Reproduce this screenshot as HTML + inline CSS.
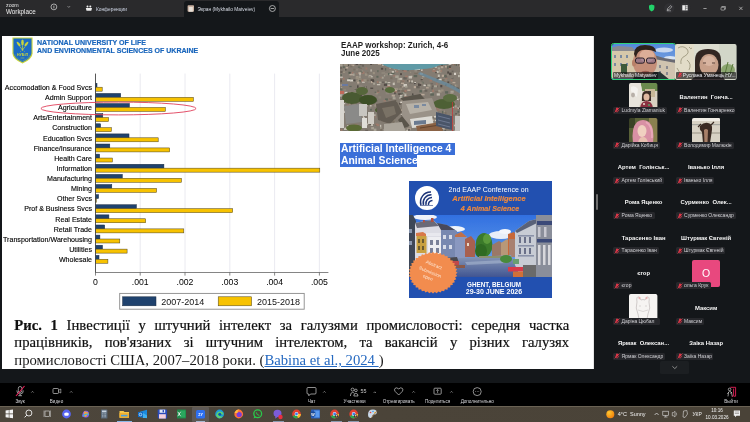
<!DOCTYPE html><html><head><meta charset="utf-8"><style>
*{margin:0;padding:0;box-sizing:border-box}
html,body{width:750px;height:422px;overflow:hidden;background:#14171a;font-family:"Liberation Sans",sans-serif}
.abs{position:absolute}
.t{position:absolute;white-space:nowrap;line-height:1}
#wrap{position:absolute;left:0;top:0;width:750px;height:422px;overflow:hidden;will-change:transform}
</style></head><body><div id="wrap">
<div class="abs" style="left:0;top:0;width:750px;height:17px;background:#2a2a2c"></div>
<div class="abs" style="left:184px;top:1px;width:95px;height:17px;background:#14171a;border-radius:3px 3px 0 0"></div>
<div class="t" style="left:6.1px;top:3.11px;font-size:5.3px;color:#e0e0e0;letter-spacing:-0.1px">zoom</div>
<div class="t" style="left:6px;top:8.97px;font-size:6.3px;color:#f0f0f0">Workplace</div>
<svg class="abs" style="left:0;top:0" width="750" height="17" viewBox="0 0 750 17"><circle cx="53.9" cy="6.9" r="2.9" fill="none" stroke="#ddd" stroke-width="0.7"/><path d="M53.9 5.6 V8.4" stroke="#ddd" stroke-width="0.7"/><path d="M67.6 6.2 L68.8 7.4 L70 6.2" fill="none" stroke="#ccc" stroke-width="0.6"/><circle cx="87.5" cy="6.6" r="1" fill="#eee"/><circle cx="90.3" cy="6.6" r="1" fill="#eee"/><path d="M85.8 8 H92 L91.3 10.7 H86.5 Z" fill="#eee"/><rect x="187.6" y="5.3" width="6.4" height="6.4" rx="0.8" fill="#c8b0a0"/><rect x="188.8" y="7" width="4" height="4.7" fill="#e8e0d8"/><circle cx="272.4" cy="8.5" r="3" fill="none" stroke="#ddd" stroke-width="0.7"/><path d="M270.6 8.5 H274.2" stroke="#ddd" stroke-width="0.7"/><path d="M649 5.6 L651.7 4.6 L654.4 5.6 V8 Q654.4 10.6 651.7 11.6 Q649 10.6 649 8 Z" fill="#22d36a"/><circle cx="669.3" cy="8.1" r="5.2" fill="#303033"/><path d="M667.2 10.3 L667.6 8.6 L670.6 5.6 L671.8 6.8 L668.8 9.8 Z" fill="none" stroke="#ddd" stroke-width="0.6"/><path d="M666.8 10.8 H671" stroke="#ddd" stroke-width="0.5"/><circle cx="685" cy="7.8" r="5.2" fill="#303033"/><rect x="682.3" y="5.2" width="5.4" height="5.2" fill="#eee"/><path d="M685.4 5.2 V10.4 M685.4 6.8 H687.7 M685.4 8.6 H687.7" stroke="#303033" stroke-width="0.5"/><path d="M703.4 8.5 H706.6" stroke="#ccc" stroke-width="0.7"/><rect x="721" y="7.3" width="3.6" height="2.8" fill="none" stroke="#ccc" stroke-width="0.6" rx="0.5"/><path d="M721.8 7.3 V6.5 H725.4 V9.2 H724.6" fill="none" stroke="#ccc" stroke-width="0.6"/><path d="M739.3 6.8 L742.5 10 M742.5 6.8 L739.3 10" stroke="#ccc" stroke-width="0.7"/></svg>
<div class="t" style="left:96px;top:7.84px;font-size:4.8px;color:#cfd6e6">Конференции</div>
<div class="t" style="left:197.6px;top:7.84px;font-size:4.8px;color:#d8dce6">Экран (Mykhailo Matveiev)</div>
<div class="abs" style="left:2.1px;top:36px;width:592.4px;height:333.1px;background:#fff;border-right:0.8px solid #e6e6e6"></div>
<div class="abs" style="left:596px;top:194px;width:1.8px;height:15.5px;background:#6e6e6e;border-radius:1px"></div>
<svg class="abs" style="left:12px;top:37px" width="21" height="27" viewBox="0 0 21 27">
<path d="M0.4 0.4 H20.6 V16.2 Q20.6 21.8 10.5 26.6 Q0.4 21.8 0.4 16.2 Z" fill="#c9d53a"/>
<path d="M1.5 1.5 H19.5 V16 Q19.5 21 10.5 25.3 Q1.5 21 1.5 16 Z" fill="#1c6cc4"/>
<path d="M3 17.5 Q3.6 21 10.5 24.2 Q17.4 21 18 17.5" fill="none" stroke="#c9d53a" stroke-width="0.5" stroke-dasharray="0.7 0.5"/>
<ellipse cx="10.5" cy="5.6" rx="1.3" ry="3" fill="#c9d53a"/>
<ellipse cx="6.6" cy="7" rx="1.1" ry="2.8" fill="#c9d53a" transform="rotate(-38 6.6 7)"/>
<ellipse cx="14.4" cy="7" rx="1.1" ry="2.8" fill="#c9d53a" transform="rotate(38 14.4 7)"/>
<path d="M10.5 8.5 V13.2 M7.8 9.5 L10.2 12.6 M13.2 9.5 L10.8 12.6" stroke="#c9d53a" stroke-width="0.7"/>
<circle cx="10.5" cy="12.8" r="0.9" fill="#c9d53a"/><circle cx="8.6" cy="14.6" r="0.45" fill="#c9d53a"/><circle cx="12.4" cy="14.6" r="0.45" fill="#c9d53a"/>
<text x="10.5" y="19.4" text-anchor="middle" font-family="Liberation Sans" font-weight="700" font-size="3.6" fill="#c9d53a">НУБіП</text>
<rect x="8.6" y="20.6" width="3.8" height="0.8" fill="#c9d53a" opacity="0.6"/>
</svg>
<div class="t" style="left:37.4px;top:38.51px;font-size:7.9px;transform:scaleX(0.895);transform-origin:0 0;font-weight:700;color:#1a66bc;-webkit-text-stroke:0.2px #1a66bc">NATIONAL UNIVERSITY OF LIFE</div>
<div class="t" style="left:37.4px;top:46.91px;font-size:7.9px;transform:scaleX(0.89);transform-origin:0 0;font-weight:700;color:#1a66bc;-webkit-text-stroke:0.2px #1a66bc">AND ENVIRONMENTAL SCIENCES OF UKRAINE</div>
<svg class="abs" style="left:0;top:0" width="750" height="422" viewBox="0 0 750 422">
<line x1="140.2" y1="73.6" x2="140.2" y2="272" stroke="#e4e4ec" stroke-width="0.8"/>
<line x1="185" y1="73.6" x2="185" y2="272" stroke="#e4e4ec" stroke-width="0.8"/>
<line x1="229.8" y1="73.6" x2="229.8" y2="272" stroke="#e4e4ec" stroke-width="0.8"/>
<line x1="274.6" y1="73.6" x2="274.6" y2="272" stroke="#e4e4ec" stroke-width="0.8"/>
<line x1="319.4" y1="73.6" x2="319.4" y2="272" stroke="#e4e4ec" stroke-width="0.8"/>
<rect x="95.5" y="83.30" width="1.50" height="3.9" fill="#1f426e" stroke="#1a2a40" stroke-width="0.5"/>
<rect x="95.5" y="87.20" width="6.70" height="4" fill="#f7c200" stroke="#4a4020" stroke-width="0.5"/>
<text x="92" y="90.00" text-anchor="end" font-family="Liberation Sans" font-size="7.1" fill="#000" stroke="#000" stroke-width="0.12">Accomodation &amp; Food Svcs</text>
<rect x="95.5" y="93.42" width="25.20" height="3.9" fill="#1f426e" stroke="#1a2a40" stroke-width="0.5"/>
<rect x="95.5" y="97.32" width="97.90" height="4" fill="#f7c200" stroke="#4a4020" stroke-width="0.5"/>
<text x="92" y="100.12" text-anchor="end" font-family="Liberation Sans" font-size="7.1" fill="#000" stroke="#000" stroke-width="0.12">Admin Support</text>
<rect x="95.5" y="103.54" width="33.90" height="3.9" fill="#1f426e" stroke="#1a2a40" stroke-width="0.5"/>
<rect x="95.5" y="107.44" width="69.90" height="4" fill="#f7c200" stroke="#4a4020" stroke-width="0.5"/>
<text x="92" y="110.24" text-anchor="end" font-family="Liberation Sans" font-size="7.1" fill="#000" stroke="#000" stroke-width="0.12">Agriculture</text>
<rect x="95.5" y="113.66" width="7.30" height="3.9" fill="#1f426e" stroke="#1a2a40" stroke-width="0.5"/>
<rect x="95.5" y="117.56" width="13.10" height="4" fill="#f7c200" stroke="#4a4020" stroke-width="0.5"/>
<text x="92" y="120.36" text-anchor="end" font-family="Liberation Sans" font-size="7.1" fill="#000" stroke="#000" stroke-width="0.12">Arts/Entertainment</text>
<rect x="95.5" y="123.78" width="5.10" height="3.9" fill="#1f426e" stroke="#1a2a40" stroke-width="0.5"/>
<rect x="95.5" y="127.68" width="15.90" height="4" fill="#f7c200" stroke="#4a4020" stroke-width="0.5"/>
<text x="92" y="130.48" text-anchor="end" font-family="Liberation Sans" font-size="7.1" fill="#000" stroke="#000" stroke-width="0.12">Construction</text>
<rect x="95.5" y="133.90" width="33.50" height="3.9" fill="#1f426e" stroke="#1a2a40" stroke-width="0.5"/>
<rect x="95.5" y="137.80" width="62.70" height="4" fill="#f7c200" stroke="#4a4020" stroke-width="0.5"/>
<text x="92" y="140.60" text-anchor="end" font-family="Liberation Sans" font-size="7.1" fill="#000" stroke="#000" stroke-width="0.12">Education Svcs</text>
<rect x="95.5" y="144.02" width="14.30" height="3.9" fill="#1f426e" stroke="#1a2a40" stroke-width="0.5"/>
<rect x="95.5" y="147.92" width="74.20" height="4" fill="#f7c200" stroke="#4a4020" stroke-width="0.5"/>
<text x="92" y="150.72" text-anchor="end" font-family="Liberation Sans" font-size="7.1" fill="#000" stroke="#000" stroke-width="0.12">Finance/Insurance</text>
<rect x="95.5" y="154.14" width="4.10" height="3.9" fill="#1f426e" stroke="#1a2a40" stroke-width="0.5"/>
<rect x="95.5" y="158.04" width="16.90" height="4" fill="#f7c200" stroke="#4a4020" stroke-width="0.5"/>
<text x="92" y="160.84" text-anchor="end" font-family="Liberation Sans" font-size="7.1" fill="#000" stroke="#000" stroke-width="0.12">Health Care</text>
<rect x="95.5" y="164.26" width="68.40" height="3.9" fill="#1f426e" stroke="#1a2a40" stroke-width="0.5"/>
<rect x="95.5" y="168.16" width="224.30" height="4" fill="#f7c200" stroke="#4a4020" stroke-width="0.5"/>
<text x="92" y="170.96" text-anchor="end" font-family="Liberation Sans" font-size="7.1" fill="#000" stroke="#000" stroke-width="0.12">Information</text>
<rect x="95.5" y="174.38" width="26.80" height="3.9" fill="#1f426e" stroke="#1a2a40" stroke-width="0.5"/>
<rect x="95.5" y="178.28" width="86.00" height="4" fill="#f7c200" stroke="#4a4020" stroke-width="0.5"/>
<text x="92" y="181.08" text-anchor="end" font-family="Liberation Sans" font-size="7.1" fill="#000" stroke="#000" stroke-width="0.12">Manufacturing</text>
<rect x="95.5" y="184.50" width="16.30" height="3.9" fill="#1f426e" stroke="#1a2a40" stroke-width="0.5"/>
<rect x="95.5" y="188.40" width="61.10" height="4" fill="#f7c200" stroke="#4a4020" stroke-width="0.5"/>
<text x="92" y="191.20" text-anchor="end" font-family="Liberation Sans" font-size="7.1" fill="#000" stroke="#000" stroke-width="0.12">Mining</text>
<rect x="95.5" y="194.62" width="3.10" height="3.9" fill="#1f426e" stroke="#1a2a40" stroke-width="0.5"/>
<rect x="95.5" y="198.52" width="0.80" height="4" fill="#f7c200" stroke="#4a4020" stroke-width="0.5"/>
<text x="92" y="201.32" text-anchor="end" font-family="Liberation Sans" font-size="7.1" fill="#000" stroke="#000" stroke-width="0.12">Other Svcs</text>
<rect x="95.5" y="204.74" width="40.90" height="3.9" fill="#1f426e" stroke="#1a2a40" stroke-width="0.5"/>
<rect x="95.5" y="208.64" width="137.20" height="4" fill="#f7c200" stroke="#4a4020" stroke-width="0.5"/>
<text x="92" y="211.44" text-anchor="end" font-family="Liberation Sans" font-size="7.1" fill="#000" stroke="#000" stroke-width="0.12">Prof &amp; Business Svcs</text>
<rect x="95.5" y="214.86" width="13.40" height="3.9" fill="#1f426e" stroke="#1a2a40" stroke-width="0.5"/>
<rect x="95.5" y="218.76" width="50.20" height="4" fill="#f7c200" stroke="#4a4020" stroke-width="0.5"/>
<text x="92" y="221.56" text-anchor="end" font-family="Liberation Sans" font-size="7.1" fill="#000" stroke="#000" stroke-width="0.12">Real Estate</text>
<rect x="95.5" y="224.98" width="9.20" height="3.9" fill="#1f426e" stroke="#1a2a40" stroke-width="0.5"/>
<rect x="95.5" y="228.88" width="88.30" height="4" fill="#f7c200" stroke="#4a4020" stroke-width="0.5"/>
<text x="92" y="231.68" text-anchor="end" font-family="Liberation Sans" font-size="7.1" fill="#000" stroke="#000" stroke-width="0.12">Retail Trade</text>
<rect x="95.5" y="235.10" width="4.40" height="3.9" fill="#1f426e" stroke="#1a2a40" stroke-width="0.5"/>
<rect x="95.5" y="239.00" width="24.30" height="4" fill="#f7c200" stroke="#4a4020" stroke-width="0.5"/>
<text x="92" y="241.80" text-anchor="end" font-family="Liberation Sans" font-size="7.1" fill="#000" stroke="#000" stroke-width="0.12">Transportation/Warehousing</text>
<rect x="95.5" y="245.22" width="7.00" height="3.9" fill="#1f426e" stroke="#1a2a40" stroke-width="0.5"/>
<rect x="95.5" y="249.12" width="31.60" height="4" fill="#f7c200" stroke="#4a4020" stroke-width="0.5"/>
<text x="92" y="251.92" text-anchor="end" font-family="Liberation Sans" font-size="7.1" fill="#000" stroke="#000" stroke-width="0.12">Utilities</text>
<rect x="95.5" y="255.34" width="3.50" height="3.9" fill="#1f426e" stroke="#1a2a40" stroke-width="0.5"/>
<rect x="95.5" y="259.24" width="12.40" height="4" fill="#f7c200" stroke="#4a4020" stroke-width="0.5"/>
<text x="92" y="262.04" text-anchor="end" font-family="Liberation Sans" font-size="7.1" fill="#000" stroke="#000" stroke-width="0.12">Wholesale</text>
<line x1="95.5" y1="73.6" x2="95.5" y2="272.9" stroke="#444" stroke-width="0.9"/>
<line x1="95.5" y1="272.5" x2="328.4" y2="272.5" stroke="#666" stroke-width="0.8"/>
<line x1="95.5" y1="272.5" x2="95.5" y2="275.6" stroke="#555" stroke-width="0.7"/>
<text x="95.5" y="285" text-anchor="middle" font-family="Liberation Sans" font-size="8.7" fill="#000">0</text>
<line x1="140.2" y1="272.5" x2="140.2" y2="275.6" stroke="#555" stroke-width="0.7"/>
<text x="140.2" y="285" text-anchor="middle" font-family="Liberation Sans" font-size="8.7" fill="#000">.001</text>
<line x1="185" y1="272.5" x2="185" y2="275.6" stroke="#555" stroke-width="0.7"/>
<text x="185" y="285" text-anchor="middle" font-family="Liberation Sans" font-size="8.7" fill="#000">.002</text>
<line x1="229.8" y1="272.5" x2="229.8" y2="275.6" stroke="#555" stroke-width="0.7"/>
<text x="229.8" y="285" text-anchor="middle" font-family="Liberation Sans" font-size="8.7" fill="#000">.003</text>
<line x1="274.6" y1="272.5" x2="274.6" y2="275.6" stroke="#555" stroke-width="0.7"/>
<text x="274.6" y="285" text-anchor="middle" font-family="Liberation Sans" font-size="8.7" fill="#000">.004</text>
<line x1="319.4" y1="272.5" x2="319.4" y2="275.6" stroke="#555" stroke-width="0.7"/>
<text x="319.4" y="285" text-anchor="middle" font-family="Liberation Sans" font-size="8.7" fill="#000">.005</text>
<rect x="119.7" y="293.4" width="184.5" height="15.8" fill="#fff" stroke="#8a8a8a" stroke-width="0.9"/>
<rect x="122.6" y="296.8" width="33.4" height="9" fill="#1f426e" stroke="#1a2a40" stroke-width="0.5"/>
<text x="161.3" y="305" font-family="Liberation Sans" font-size="9" fill="#111">2007-2014</text>
<rect x="218.2" y="296.8" width="33.4" height="9" fill="#f7c200" stroke="#4a4020" stroke-width="0.5"/>
<text x="257" y="305" font-family="Liberation Sans" font-size="9" fill="#111">2015-2018</text>
<ellipse cx="118.5" cy="108.5" rx="77.6" ry="6.4" fill="none" stroke="#e0405a" stroke-width="0.9"/>
</svg>
<div class="t" style="left:340.5px;top:40.77px;font-size:8.9px;transform:scaleX(0.9);transform-origin:0 0;font-weight:700;color:#1e1e1e">EAAP workshop: Zurich, 4-6</div>
<div class="t" style="left:340.5px;top:49.47px;font-size:8.9px;transform:scaleX(0.9);transform-origin:0 0;font-weight:700;color:#1e1e1e">June 2025</div>
<svg class="abs" style="left:340px;top:63.6px" width="120.3" height="67.5" viewBox="0 0 120.3 67.5"><defs><filter id="zb" x="-0.05" y="-0.05" width="1.1" height="1.1"><feGaussianBlur stdDeviation="0.5"/></filter><clipPath id="zc"><rect width="120.3" height="67.5"/></clipPath></defs><g clip-path="url(#zc)"><g filter="url(#zb)"><rect x="-3" y="-3" width="127" height="74" fill="#847c72"/><rect x="53.6" y="37.2" width="3.4" height="1.7" fill="#d8d2c8"/><rect x="103.2" y="11.3" width="3.1" height="1.8" fill="#5e665a"/><rect x="95.5" y="4.6" width="1.9" height="1.1" fill="#9c7a6c"/><rect x="3.2" y="66.8" width="3.5" height="2.0" fill="#5e665a"/><rect x="78.0" y="41.6" width="3.2" height="1.1" fill="#a8a294"/><rect x="21.4" y="14.9" width="1.3" height="1.7" fill="#7a7064"/><rect x="70.7" y="11.7" width="1.8" height="1.5" fill="#a8a294"/><rect x="79.5" y="30.0" width="1.9" height="2.6" fill="#6a645c"/><rect x="85.1" y="20.1" width="1.8" height="1.5" fill="#6a645c"/><rect x="67.3" y="5.6" width="1.5" height="1.5" fill="#6a645c"/><rect x="115.8" y="57.3" width="1.2" height="1.3" fill="#a8a294"/><rect x="55.8" y="66.6" width="2.2" height="1.1" fill="#9c7a6c"/><rect x="22.4" y="45.2" width="2.0" height="1.5" fill="#a8a294"/><rect x="116.6" y="51.1" width="1.5" height="1.4" fill="#6a645c"/><rect x="-0.7" y="30.5" width="2.4" height="2.1" fill="#c4beb2"/><rect x="53.0" y="11.3" width="3.0" height="1.2" fill="#9c7a6c"/><rect x="45.2" y="25.6" width="3.6" height="1.0" fill="#5e665a"/><rect x="35.4" y="59.9" width="1.7" height="1.6" fill="#5e665a"/><rect x="76.9" y="5.0" width="3.6" height="1.3" fill="#524c46"/><rect x="-0.8" y="40.7" width="3.2" height="1.6" fill="#6a645c"/><rect x="9.1" y="38.8" width="1.8" height="2.0" fill="#9a9080"/><rect x="74.5" y="6.9" width="2.6" height="2.3" fill="#8e867a"/><rect x="104.6" y="10.8" width="1.6" height="2.5" fill="#5e665a"/><rect x="28.7" y="11.3" width="3.0" height="2.5" fill="#c4beb2"/><rect x="82.5" y="25.2" width="2.4" height="1.1" fill="#a8a294"/><rect x="10.8" y="0.7" width="3.5" height="1.4" fill="#b8a898"/><rect x="29.6" y="55.7" width="2.6" height="1.5" fill="#8e867a"/><rect x="112.3" y="66.4" width="1.5" height="1.8" fill="#9c7a6c"/><rect x="102.8" y="41.0" width="1.9" height="2.5" fill="#c4beb2"/><rect x="90.1" y="2.8" width="2.2" height="1.4" fill="#a8a294"/><rect x="19.7" y="23.8" width="2.6" height="1.2" fill="#9a9080"/><rect x="15.0" y="29.5" width="2.0" height="2.2" fill="#d8d2c8"/><rect x="69.9" y="7.8" width="1.3" height="1.0" fill="#9a9080"/><rect x="84.2" y="65.4" width="1.3" height="2.0" fill="#7a7064"/><rect x="6.3" y="19.8" width="1.5" height="1.1" fill="#7a7064"/><rect x="65.2" y="49.6" width="3.4" height="2.2" fill="#8e867a"/><rect x="95.6" y="62.1" width="2.0" height="2.1" fill="#6a645c"/><rect x="105.1" y="27.2" width="3.1" height="2.4" fill="#5e665a"/><rect x="-0.2" y="44.4" width="2.1" height="1.0" fill="#6a645c"/><rect x="7.9" y="42.8" width="3.6" height="2.4" fill="#9a9080"/><rect x="45.8" y="49.5" width="2.6" height="1.7" fill="#d8d2c8"/><rect x="8.3" y="50.5" width="1.3" height="2.0" fill="#7a7064"/><rect x="0.7" y="65.0" width="1.5" height="2.2" fill="#9c7a6c"/><rect x="111.2" y="15.9" width="1.2" height="1.5" fill="#9c7a6c"/><rect x="73.2" y="34.3" width="3.0" height="1.5" fill="#7a7064"/><rect x="59.3" y="14.9" width="2.2" height="1.4" fill="#9c7a6c"/><rect x="51.0" y="54.4" width="3.4" height="2.4" fill="#b8a898"/><rect x="25.0" y="62.5" width="1.7" height="1.2" fill="#9a9080"/><rect x="101.0" y="57.4" width="2.9" height="2.5" fill="#524c46"/><rect x="99.1" y="5.9" width="2.3" height="2.5" fill="#b8a898"/><rect x="45.1" y="34.4" width="2.8" height="2.1" fill="#5e665a"/><rect x="53.7" y="3.2" width="1.3" height="2.4" fill="#a8a294"/><rect x="81.4" y="17.7" width="2.1" height="2.0" fill="#5e665a"/><rect x="0.4" y="7.5" width="2.3" height="1.0" fill="#524c46"/><rect x="27.2" y="7.9" width="1.3" height="2.0" fill="#7a7064"/><rect x="11.4" y="35.5" width="2.7" height="1.6" fill="#6a645c"/><rect x="82.2" y="12.0" width="2.3" height="1.3" fill="#a8a294"/><rect x="90.9" y="35.4" width="1.3" height="1.4" fill="#9a9080"/><rect x="64.4" y="64.3" width="2.4" height="2.6" fill="#8e867a"/><rect x="46.4" y="53.4" width="3.4" height="1.1" fill="#b8a898"/><rect x="14.0" y="29.7" width="2.7" height="2.5" fill="#b8a898"/><rect x="65.7" y="43.7" width="2.4" height="2.3" fill="#9a9080"/><rect x="55.0" y="43.6" width="1.7" height="2.2" fill="#9c7a6c"/><rect x="111.7" y="6.6" width="1.8" height="1.6" fill="#6a645c"/><rect x="118.2" y="35.6" width="3.1" height="1.5" fill="#a8a294"/><rect x="40.9" y="3.8" width="2.3" height="1.9" fill="#524c46"/><rect x="58.0" y="-0.0" width="3.1" height="1.1" fill="#a8a294"/><rect x="19.3" y="21.5" width="3.1" height="1.2" fill="#8e867a"/><rect x="121.0" y="61.0" width="2.4" height="2.1" fill="#7a7064"/><rect x="114.3" y="32.5" width="3.5" height="1.1" fill="#c4beb2"/><rect x="52.0" y="37.1" width="3.2" height="1.9" fill="#8e867a"/><rect x="62.3" y="57.1" width="2.5" height="1.5" fill="#b8a898"/><rect x="115.4" y="58.9" width="2.7" height="1.5" fill="#8e867a"/><rect x="117.1" y="34.7" width="2.6" height="1.3" fill="#d8d2c8"/><rect x="12.1" y="-1.7" width="2.1" height="1.9" fill="#a8a294"/><rect x="61.5" y="26.0" width="3.1" height="1.9" fill="#7a7064"/><rect x="9.5" y="9.7" width="3.4" height="1.7" fill="#b8a898"/><rect x="31.1" y="31.1" width="1.5" height="1.7" fill="#7a7064"/><rect x="62.6" y="5.6" width="2.2" height="1.0" fill="#524c46"/><rect x="13.9" y="52.6" width="1.3" height="1.3" fill="#c4beb2"/><rect x="-0.5" y="17.9" width="2.9" height="1.4" fill="#7a7064"/><rect x="10.9" y="49.2" width="1.5" height="1.8" fill="#524c46"/><rect x="86.3" y="47.1" width="3.3" height="1.0" fill="#9c7a6c"/><rect x="48.8" y="35.1" width="1.6" height="1.3" fill="#9c7a6c"/><rect x="63.7" y="13.3" width="1.7" height="1.9" fill="#5e665a"/><rect x="103.4" y="14.3" width="3.0" height="2.3" fill="#8e867a"/><rect x="36.9" y="20.0" width="3.4" height="1.3" fill="#c4beb2"/><rect x="107.2" y="7.4" width="1.8" height="2.2" fill="#524c46"/><rect x="45.7" y="28.4" width="3.5" height="1.9" fill="#8e867a"/><rect x="22.7" y="42.0" width="3.1" height="1.2" fill="#5e665a"/><rect x="81.9" y="61.8" width="3.5" height="1.2" fill="#d8d2c8"/><rect x="76.1" y="22.0" width="3.6" height="2.3" fill="#6a645c"/><rect x="57.3" y="-0.3" width="3.0" height="2.0" fill="#5e665a"/><rect x="57.2" y="11.3" width="1.5" height="1.3" fill="#8e867a"/><rect x="119.8" y="62.9" width="1.4" height="1.1" fill="#9c7a6c"/><rect x="54.8" y="51.5" width="2.0" height="1.7" fill="#d8d2c8"/><rect x="41.6" y="12.7" width="2.1" height="2.0" fill="#a8a294"/><rect x="101.8" y="10.7" width="2.3" height="2.2" fill="#b8a898"/><rect x="111.4" y="40.3" width="1.4" height="2.3" fill="#9a9080"/><rect x="107.9" y="54.1" width="2.9" height="2.4" fill="#9c7a6c"/><rect x="113.6" y="37.9" width="1.7" height="1.9" fill="#9a9080"/><rect x="97.0" y="16.1" width="3.4" height="2.2" fill="#8e867a"/><rect x="98.2" y="26.4" width="3.4" height="2.4" fill="#9a9080"/><rect x="92.4" y="51.6" width="2.2" height="2.2" fill="#6a645c"/><rect x="96.1" y="19.1" width="1.4" height="2.4" fill="#9c7a6c"/><rect x="109.0" y="1.5" width="1.9" height="2.5" fill="#524c46"/><rect x="39.6" y="44.2" width="2.6" height="1.9" fill="#b8a898"/><rect x="61.3" y="32.8" width="1.7" height="1.2" fill="#b8a898"/><rect x="118.6" y="-0.4" width="2.7" height="2.2" fill="#524c46"/><rect x="52.6" y="33.3" width="3.0" height="2.0" fill="#a8a294"/><rect x="10.1" y="15.6" width="3.4" height="1.9" fill="#d8d2c8"/><rect x="49.1" y="34.4" width="3.2" height="1.2" fill="#7a7064"/><rect x="97.6" y="3.3" width="2.6" height="2.2" fill="#a8a294"/><rect x="45.5" y="63.7" width="2.1" height="2.6" fill="#7a7064"/><rect x="64.7" y="39.8" width="2.2" height="1.8" fill="#524c46"/><rect x="62.8" y="39.8" width="2.1" height="1.5" fill="#9c7a6c"/><rect x="31.2" y="63.1" width="2.8" height="2.2" fill="#a8a294"/><rect x="-0.3" y="15.2" width="1.3" height="1.3" fill="#9c7a6c"/><rect x="46.0" y="60.8" width="3.0" height="1.1" fill="#9a9080"/><rect x="7.0" y="61.4" width="2.2" height="1.8" fill="#c4beb2"/><rect x="3.6" y="4.9" width="3.1" height="2.5" fill="#8e867a"/><rect x="118.4" y="55.2" width="2.6" height="1.2" fill="#5e665a"/><rect x="49.3" y="6.3" width="3.3" height="1.6" fill="#8e867a"/><rect x="13.3" y="29.0" width="2.8" height="1.7" fill="#524c46"/><rect x="76.7" y="45.7" width="2.1" height="2.2" fill="#8e867a"/><rect x="115.2" y="49.4" width="1.8" height="1.2" fill="#524c46"/><rect x="94.5" y="41.7" width="2.1" height="1.4" fill="#9c7a6c"/><rect x="87.2" y="46.9" width="1.7" height="1.4" fill="#c4beb2"/><rect x="21.3" y="15.4" width="3.6" height="2.5" fill="#9c7a6c"/><rect x="2.9" y="2.3" width="1.9" height="1.7" fill="#5e665a"/><rect x="2.7" y="13.6" width="1.9" height="2.2" fill="#9c7a6c"/><rect x="17.8" y="14.4" width="3.6" height="1.8" fill="#9a9080"/><rect x="23.9" y="22.1" width="3.0" height="2.3" fill="#6a645c"/><rect x="96.7" y="29.3" width="3.2" height="2.3" fill="#c4beb2"/><rect x="52.7" y="50.3" width="2.1" height="1.2" fill="#8e867a"/><rect x="78.4" y="67.2" width="2.0" height="1.9" fill="#8e867a"/><rect x="50.6" y="23.8" width="1.4" height="2.4" fill="#6a645c"/><rect x="64.9" y="28.2" width="2.6" height="2.3" fill="#7a7064"/><rect x="34.8" y="52.3" width="1.4" height="1.3" fill="#9c7a6c"/><rect x="72.3" y="46.7" width="2.4" height="2.2" fill="#9a9080"/><rect x="32.8" y="8.0" width="2.1" height="2.2" fill="#9a9080"/><rect x="109.5" y="20.6" width="2.3" height="2.0" fill="#9c7a6c"/><rect x="110.3" y="28.7" width="3.1" height="1.5" fill="#9a9080"/><rect x="25.2" y="65.7" width="3.0" height="1.8" fill="#6a645c"/><rect x="42.5" y="23.6" width="2.1" height="1.6" fill="#b8a898"/><rect x="95.9" y="49.7" width="2.1" height="1.6" fill="#8e867a"/><rect x="100.9" y="37.4" width="1.6" height="2.2" fill="#524c46"/><rect x="97.9" y="13.5" width="1.3" height="1.3" fill="#524c46"/><rect x="116.9" y="43.6" width="3.1" height="1.1" fill="#d8d2c8"/><rect x="35.6" y="36.2" width="2.0" height="1.4" fill="#6a645c"/><rect x="108.6" y="3.9" width="2.7" height="1.2" fill="#9c7a6c"/><rect x="49.9" y="47.9" width="2.4" height="2.5" fill="#9a9080"/><rect x="92.1" y="25.6" width="2.0" height="2.5" fill="#9c7a6c"/><rect x="14.8" y="32.2" width="3.1" height="1.1" fill="#5e665a"/><rect x="110.5" y="26.7" width="3.2" height="2.1" fill="#a8a294"/><rect x="97.1" y="56.4" width="3.3" height="2.5" fill="#9c7a6c"/><rect x="1.0" y="23.3" width="1.2" height="1.2" fill="#b8a898"/><rect x="110.6" y="15.2" width="1.6" height="2.0" fill="#9c7a6c"/><rect x="18.6" y="12.3" width="2.2" height="1.5" fill="#a8a294"/><rect x="56.0" y="49.2" width="1.9" height="1.2" fill="#8e867a"/><rect x="110.2" y="50.7" width="1.2" height="1.8" fill="#a8a294"/><rect x="36.4" y="11.8" width="2.1" height="1.9" fill="#5e665a"/><rect x="86.2" y="39.6" width="1.7" height="1.3" fill="#524c46"/><rect x="47.5" y="61.7" width="3.4" height="2.0" fill="#d8d2c8"/><rect x="57.0" y="16.2" width="3.3" height="2.5" fill="#9a9080"/><rect x="79.2" y="52.0" width="1.4" height="2.4" fill="#b8a898"/><rect x="4.1" y="64.3" width="3.1" height="1.6" fill="#d8d2c8"/><rect x="95.7" y="52.2" width="3.1" height="1.1" fill="#c4beb2"/><rect x="107.7" y="59.2" width="3.4" height="1.7" fill="#c4beb2"/><rect x="85.7" y="40.4" width="1.6" height="1.3" fill="#9a9080"/><rect x="15.8" y="61.6" width="3.1" height="1.2" fill="#5e665a"/><rect x="30.8" y="35.4" width="1.6" height="2.2" fill="#a8a294"/><rect x="23.1" y="62.1" width="1.6" height="1.2" fill="#9a9080"/><rect x="31.2" y="48.2" width="1.4" height="1.8" fill="#7a7064"/><rect x="8.2" y="50.4" width="2.5" height="1.8" fill="#a8a294"/><rect x="95.1" y="27.2" width="3.4" height="1.1" fill="#7a7064"/><rect x="23.6" y="36.0" width="2.5" height="1.3" fill="#524c46"/><rect x="36.9" y="26.4" width="2.5" height="2.6" fill="#9c7a6c"/><rect x="86.0" y="23.2" width="2.8" height="1.2" fill="#b8a898"/><rect x="81.1" y="50.3" width="3.1" height="1.2" fill="#7a7064"/><rect x="-0.5" y="24.4" width="2.9" height="1.4" fill="#5e665a"/><rect x="11.9" y="52.0" width="3.3" height="2.4" fill="#c4beb2"/><rect x="108.9" y="8.6" width="2.7" height="2.5" fill="#524c46"/><rect x="115.4" y="50.8" width="2.5" height="1.1" fill="#c4beb2"/><rect x="22.6" y="49.2" width="2.0" height="2.5" fill="#5e665a"/><rect x="55.8" y="42.8" width="2.3" height="1.6" fill="#6a645c"/><rect x="15.3" y="4.6" width="2.8" height="2.1" fill="#8e867a"/><rect x="21.8" y="0.6" width="2.3" height="2.1" fill="#6a645c"/><rect x="25.9" y="9.0" width="1.5" height="1.7" fill="#6a645c"/><rect x="40.0" y="55.6" width="3.4" height="1.2" fill="#c4beb2"/><rect x="92.3" y="55.5" width="2.1" height="1.5" fill="#b8a898"/><rect x="74.6" y="48.9" width="2.7" height="1.5" fill="#c4beb2"/><rect x="79.2" y="40.6" width="1.2" height="1.5" fill="#9a9080"/><rect x="35.7" y="28.9" width="2.5" height="1.3" fill="#9a9080"/><rect x="95.0" y="55.8" width="2.7" height="1.3" fill="#d8d2c8"/><rect x="109.1" y="36.4" width="2.0" height="1.8" fill="#8e867a"/><rect x="68.6" y="11.9" width="3.4" height="2.6" fill="#c4beb2"/><rect x="67.8" y="-0.1" width="2.8" height="2.2" fill="#8e867a"/><rect x="28.1" y="38.4" width="2.9" height="1.5" fill="#9a9080"/><rect x="30.7" y="59.8" width="2.3" height="2.2" fill="#c4beb2"/><rect x="109.2" y="36.0" width="2.5" height="1.9" fill="#524c46"/><rect x="18.7" y="50.2" width="3.4" height="1.5" fill="#8e867a"/><rect x="13.1" y="55.7" width="1.9" height="2.4" fill="#c4beb2"/><rect x="91.3" y="23.4" width="1.6" height="2.0" fill="#6a645c"/><rect x="53.9" y="26.2" width="3.1" height="2.5" fill="#9c7a6c"/><rect x="15.0" y="50.9" width="3.2" height="2.5" fill="#5e665a"/><rect x="70.8" y="54.3" width="1.2" height="1.3" fill="#7a7064"/><rect x="2.1" y="35.0" width="1.5" height="1.6" fill="#9a9080"/><rect x="61.9" y="16.5" width="2.6" height="1.5" fill="#9c7a6c"/><rect x="94.4" y="48.5" width="3.1" height="1.6" fill="#7a7064"/><rect x="71.8" y="30.9" width="2.2" height="2.0" fill="#5e665a"/><rect x="91.2" y="50.6" width="2.4" height="2.6" fill="#b8a898"/><rect x="99.5" y="6.2" width="1.5" height="2.5" fill="#9a9080"/><rect x="62.6" y="28.3" width="3.4" height="1.5" fill="#a8a294"/><rect x="34.4" y="41.1" width="2.2" height="1.6" fill="#9a9080"/><rect x="90.5" y="19.3" width="2.6" height="1.1" fill="#6a645c"/><rect x="101.9" y="15.0" width="3.3" height="2.6" fill="#7a7064"/><rect x="83.5" y="34.8" width="1.8" height="1.5" fill="#b8a898"/><rect x="113.6" y="59.6" width="3.6" height="2.2" fill="#9c7a6c"/><rect x="43.4" y="36.2" width="2.6" height="1.3" fill="#9c7a6c"/><rect x="89.8" y="37.7" width="3.4" height="1.2" fill="#8e867a"/><rect x="13.2" y="35.6" width="3.5" height="1.0" fill="#c4beb2"/><rect x="87.6" y="-0.3" width="1.6" height="1.7" fill="#7a7064"/><rect x="98.3" y="25.8" width="2.1" height="1.9" fill="#a8a294"/><rect x="35.7" y="29.8" width="2.0" height="1.5" fill="#8e867a"/><rect x="112.9" y="66.4" width="2.3" height="1.3" fill="#524c46"/><rect x="103.7" y="46.5" width="1.3" height="1.5" fill="#9a9080"/><rect x="108.6" y="-0.9" width="2.7" height="2.1" fill="#d8d2c8"/><rect x="22.8" y="42.3" width="1.7" height="2.4" fill="#a8a294"/><rect x="78.0" y="19.4" width="3.2" height="2.5" fill="#524c46"/><rect x="105.0" y="47.9" width="1.5" height="2.1" fill="#7a7064"/><rect x="49.1" y="9.9" width="3.3" height="1.2" fill="#c4beb2"/><rect x="31.1" y="48.4" width="2.4" height="1.5" fill="#524c46"/><rect x="43.8" y="44.3" width="3.3" height="1.9" fill="#c4beb2"/><rect x="118.2" y="60.7" width="1.6" height="1.4" fill="#8e867a"/><rect x="76.7" y="4.3" width="3.6" height="1.7" fill="#d8d2c8"/><rect x="7.1" y="61.5" width="1.2" height="1.9" fill="#d8d2c8"/><rect x="28.9" y="54.2" width="1.4" height="1.5" fill="#c4beb2"/><rect x="28.2" y="17.5" width="2.5" height="1.3" fill="#8e867a"/><rect x="119.5" y="0.4" width="2.3" height="2.2" fill="#b8a898"/><rect x="-1.7" y="60.4" width="1.3" height="1.1" fill="#9c7a6c"/><rect x="109.9" y="20.5" width="2.4" height="1.1" fill="#524c46"/><rect x="60.2" y="57.2" width="2.8" height="1.8" fill="#d8d2c8"/><rect x="19.4" y="52.6" width="1.6" height="2.0" fill="#c4beb2"/><rect x="80.2" y="36.3" width="1.8" height="2.1" fill="#c4beb2"/><rect x="29.9" y="36.1" width="3.2" height="2.0" fill="#524c46"/><rect x="2.3" y="39.8" width="2.9" height="1.9" fill="#8e867a"/><rect x="38.0" y="40.6" width="2.7" height="2.3" fill="#d8d2c8"/><rect x="52.3" y="16.4" width="3.1" height="1.1" fill="#8e867a"/><rect x="68.0" y="36.0" width="3.1" height="1.4" fill="#8e867a"/><rect x="4.6" y="27.8" width="2.9" height="2.3" fill="#d8d2c8"/><rect x="94.0" y="51.6" width="2.4" height="2.0" fill="#d8d2c8"/><rect x="19.1" y="15.8" width="1.6" height="2.1" fill="#5e665a"/><rect x="94.8" y="2.3" width="2.2" height="1.6" fill="#c4beb2"/><rect x="84.6" y="65.0" width="1.5" height="2.2" fill="#5e665a"/><rect x="119.3" y="8.1" width="2.3" height="2.2" fill="#a8a294"/><rect x="-1.6" y="26.7" width="2.5" height="1.1" fill="#d8d2c8"/><rect x="34.7" y="27.7" width="1.4" height="1.1" fill="#5e665a"/><rect x="26.3" y="15.7" width="2.5" height="1.4" fill="#7a7064"/><rect x="8.6" y="13.9" width="1.9" height="2.5" fill="#5e665a"/><rect x="24.9" y="9.2" width="2.6" height="2.6" fill="#9a9080"/><rect x="67.8" y="61.8" width="3.3" height="2.5" fill="#8e867a"/><rect x="54.9" y="25.5" width="3.2" height="1.6" fill="#a8a294"/><rect x="24.5" y="22.3" width="1.6" height="1.9" fill="#8e867a"/><rect x="57.1" y="26.0" width="2.6" height="2.2" fill="#7a7064"/><rect x="53.0" y="67.5" width="2.8" height="2.4" fill="#c4beb2"/><rect x="64.5" y="27.3" width="1.3" height="1.4" fill="#524c46"/><rect x="74.4" y="34.3" width="3.0" height="1.8" fill="#5e665a"/><rect x="111.6" y="48.1" width="1.8" height="1.6" fill="#8e867a"/><rect x="87.6" y="52.4" width="1.5" height="1.4" fill="#6a645c"/><rect x="0.5" y="20.5" width="2.1" height="1.1" fill="#b8a898"/><rect x="38.0" y="51.9" width="2.4" height="1.1" fill="#b8a898"/><rect x="72.8" y="32.2" width="1.7" height="1.8" fill="#8e867a"/><rect x="1.9" y="19.9" width="2.2" height="1.9" fill="#8e867a"/><rect x="61.6" y="36.4" width="2.0" height="1.7" fill="#b8a898"/><rect x="16.1" y="12.3" width="1.9" height="2.1" fill="#b8a898"/><rect x="14.8" y="34.2" width="2.1" height="1.2" fill="#9a9080"/><rect x="40.4" y="13.1" width="1.3" height="1.0" fill="#9c7a6c"/><rect x="57.4" y="-1.2" width="3.0" height="2.2" fill="#9c7a6c"/><rect x="80.5" y="62.3" width="1.7" height="2.1" fill="#9c7a6c"/><rect x="13.0" y="52.2" width="2.1" height="2.3" fill="#524c46"/><rect x="9.1" y="27.9" width="2.1" height="1.1" fill="#b8a898"/><rect x="112.5" y="17.9" width="2.9" height="1.4" fill="#b8a898"/><rect x="22.8" y="51.8" width="2.0" height="2.1" fill="#d8d2c8"/><rect x="9.4" y="21.9" width="2.2" height="1.2" fill="#5e665a"/><rect x="29.6" y="57.7" width="1.9" height="2.5" fill="#b8a898"/><rect x="12.8" y="61.7" width="3.4" height="1.4" fill="#b8a898"/><rect x="59.0" y="39.0" width="2.3" height="1.5" fill="#524c46"/><rect x="6.9" y="0.5" width="2.0" height="1.6" fill="#524c46"/><rect x="30.2" y="44.8" width="1.6" height="1.8" fill="#5e665a"/><rect x="40.0" y="60.8" width="1.3" height="2.1" fill="#c4beb2"/><rect x="92.9" y="41.9" width="2.7" height="1.7" fill="#b8a898"/><rect x="5.8" y="2.8" width="2.3" height="1.7" fill="#b8a898"/><rect x="2.7" y="7.5" width="2.4" height="1.5" fill="#9a9080"/><rect x="56.2" y="-0.5" width="2.7" height="1.4" fill="#524c46"/><rect x="81.7" y="14.4" width="1.2" height="1.9" fill="#b8a898"/><rect x="-1.6" y="36.3" width="3.2" height="2.2" fill="#6a645c"/><rect x="74.8" y="37.3" width="3.2" height="2.6" fill="#9a9080"/><rect x="30.5" y="5.3" width="1.2" height="2.3" fill="#c4beb2"/><rect x="83.5" y="46.1" width="3.5" height="2.3" fill="#8e867a"/><rect x="39.0" y="46.2" width="3.1" height="1.5" fill="#b8a898"/><rect x="33.1" y="50.4" width="2.5" height="1.4" fill="#c4beb2"/><rect x="42.6" y="47.4" width="3.4" height="2.2" fill="#6a645c"/><rect x="119.7" y="55.2" width="3.3" height="1.5" fill="#7a7064"/><rect x="61.0" y="45.5" width="1.3" height="2.0" fill="#b8a898"/><rect x="105.0" y="1.7" width="1.8" height="1.8" fill="#b8a898"/><rect x="29.1" y="42.4" width="2.1" height="2.1" fill="#8e867a"/><rect x="39.1" y="51.1" width="3.2" height="2.3" fill="#5e665a"/><rect x="119.0" y="42.9" width="1.5" height="2.2" fill="#524c46"/><rect x="96.6" y="6.8" width="2.1" height="2.1" fill="#c4beb2"/><rect x="78.2" y="66.2" width="2.3" height="2.1" fill="#8e867a"/><rect x="31.0" y="17.0" width="1.8" height="2.1" fill="#b8a898"/><rect x="112.8" y="67.2" width="1.3" height="2.1" fill="#6a645c"/><rect x="105.1" y="11.6" width="2.1" height="1.9" fill="#6a645c"/><rect x="47.8" y="61.3" width="3.2" height="2.4" fill="#8e867a"/><rect x="43.9" y="19.6" width="3.1" height="2.3" fill="#524c46"/><rect x="25.5" y="48.5" width="2.2" height="1.2" fill="#5e665a"/><rect x="45.9" y="46.6" width="2.5" height="2.3" fill="#8e867a"/><rect x="52.4" y="56.4" width="2.5" height="2.4" fill="#7a7064"/><rect x="51.2" y="8.6" width="3.3" height="1.4" fill="#5e665a"/><rect x="15.7" y="41.8" width="1.9" height="1.4" fill="#7a7064"/><rect x="22.7" y="36.6" width="2.5" height="1.2" fill="#a8a294"/><rect x="107.8" y="19.7" width="1.4" height="1.3" fill="#7a7064"/><rect x="15.2" y="53.2" width="3.6" height="1.7" fill="#a8a294"/><rect x="49.0" y="54.5" width="2.2" height="1.1" fill="#d8d2c8"/><rect x="73.9" y="55.9" width="1.8" height="1.3" fill="#524c46"/><rect x="104.3" y="67.6" width="2.3" height="2.3" fill="#a8a294"/><rect x="19.6" y="-0.1" width="1.6" height="1.2" fill="#6a645c"/><rect x="31.3" y="-0.3" width="2.5" height="1.1" fill="#7a7064"/><rect x="-0.7" y="12.7" width="3.5" height="1.0" fill="#d8d2c8"/><rect x="30.6" y="15.2" width="3.4" height="1.8" fill="#524c46"/><rect x="96.8" y="55.9" width="3.0" height="2.6" fill="#6a645c"/><rect x="113.1" y="31.7" width="3.2" height="1.7" fill="#5e665a"/><rect x="0.9" y="38.4" width="1.7" height="1.6" fill="#9a9080"/><rect x="60.3" y="17.4" width="3.6" height="2.0" fill="#7a7064"/><rect x="41.5" y="17.5" width="3.4" height="1.5" fill="#6a645c"/><rect x="30.5" y="13.0" width="1.6" height="1.1" fill="#8e867a"/><rect x="65.2" y="45.6" width="1.6" height="1.2" fill="#8e867a"/><rect x="43.9" y="10.8" width="1.3" height="1.6" fill="#a8a294"/><rect x="47.6" y="20.5" width="2.5" height="2.5" fill="#c4beb2"/><rect x="0.6" y="10.2" width="1.4" height="1.9" fill="#5e665a"/><rect x="119.5" y="28.1" width="3.5" height="1.4" fill="#b8a898"/><rect x="94.0" y="60.1" width="3.2" height="1.1" fill="#b8a898"/><rect x="114.6" y="20.6" width="1.6" height="1.6" fill="#a8a294"/><rect x="16.2" y="42.4" width="2.1" height="2.0" fill="#c4beb2"/><rect x="73.8" y="22.1" width="2.3" height="2.1" fill="#b8a898"/><rect x="60.1" y="37.7" width="1.5" height="2.3" fill="#7a7064"/><rect x="51.7" y="30.7" width="3.2" height="1.8" fill="#b8a898"/><rect x="71.9" y="38.1" width="2.4" height="1.1" fill="#9c7a6c"/><rect x="53.6" y="17.9" width="1.3" height="1.1" fill="#9a9080"/><rect x="16.7" y="30.8" width="3.6" height="2.2" fill="#9a9080"/><rect x="21.2" y="30.8" width="2.5" height="1.1" fill="#8e867a"/><rect x="90.6" y="60.8" width="1.5" height="1.3" fill="#9c7a6c"/><rect x="95.2" y="8.0" width="1.5" height="1.2" fill="#524c46"/><rect x="120.2" y="2.5" width="3.3" height="2.1" fill="#524c46"/><rect x="61.7" y="22.4" width="1.7" height="1.0" fill="#b8a898"/><rect x="22.1" y="17.6" width="2.7" height="1.1" fill="#d8d2c8"/><rect x="52.2" y="51.0" width="3.3" height="1.1" fill="#7a7064"/><rect x="103.2" y="52.0" width="2.5" height="2.4" fill="#8e867a"/><rect x="97.8" y="10.5" width="2.0" height="2.5" fill="#c4beb2"/><rect x="100.6" y="6.2" width="1.6" height="1.6" fill="#9c7a6c"/><rect x="73.9" y="61.1" width="1.4" height="2.6" fill="#c4beb2"/><rect x="63.5" y="20.1" width="3.5" height="2.6" fill="#d8d2c8"/><rect x="80.2" y="28.2" width="1.2" height="1.5" fill="#9a9080"/><rect x="101.9" y="64.2" width="2.8" height="1.3" fill="#c4beb2"/><rect x="20.2" y="7.0" width="2.9" height="1.7" fill="#8e867a"/><rect x="32.2" y="16.1" width="2.0" height="2.0" fill="#524c46"/><rect x="22.1" y="67.6" width="2.9" height="2.2" fill="#9a9080"/><rect x="105.1" y="51.9" width="1.7" height="1.1" fill="#524c46"/><rect x="50.2" y="55.4" width="2.2" height="1.7" fill="#d8d2c8"/><rect x="13.2" y="4.7" width="2.4" height="1.7" fill="#7a7064"/><rect x="69.3" y="17.9" width="3.3" height="1.5" fill="#6a645c"/><rect x="81.2" y="29.8" width="3.4" height="1.6" fill="#b8a898"/><rect x="72.0" y="29.4" width="1.4" height="1.7" fill="#524c46"/><rect x="69.9" y="44.1" width="1.8" height="2.1" fill="#a8a294"/><rect x="80.7" y="15.1" width="2.2" height="1.2" fill="#524c46"/><rect x="45.7" y="17.5" width="1.4" height="2.4" fill="#5e665a"/><rect x="10.8" y="44.0" width="2.3" height="1.3" fill="#9a9080"/><rect x="-0.0" y="0.1" width="2.6" height="2.1" fill="#a8a294"/><rect x="80.2" y="8.9" width="1.4" height="1.3" fill="#d8d2c8"/><rect x="36.9" y="45.0" width="2.7" height="2.6" fill="#a8a294"/><rect x="120.1" y="25.7" width="3.2" height="2.0" fill="#6a645c"/><rect x="120.7" y="2.7" width="2.3" height="1.6" fill="#9c7a6c"/><rect x="112.6" y="34.2" width="2.6" height="1.8" fill="#8e867a"/><rect x="61.4" y="4.7" width="3.1" height="1.0" fill="#9c7a6c"/><rect x="83.6" y="53.0" width="3.4" height="2.1" fill="#7a7064"/><rect x="93.4" y="6.4" width="2.3" height="1.0" fill="#9a9080"/><rect x="114.2" y="60.7" width="1.3" height="1.6" fill="#d8d2c8"/><rect x="67.0" y="66.2" width="3.1" height="1.2" fill="#d8d2c8"/><rect x="67.4" y="2.7" width="1.8" height="2.1" fill="#d8d2c8"/><rect x="61.0" y="18.6" width="3.1" height="1.4" fill="#b8a898"/><rect x="55.4" y="67.3" width="2.6" height="1.3" fill="#6a645c"/><rect x="54.5" y="57.6" width="1.5" height="2.4" fill="#8e867a"/><rect x="15.7" y="37.5" width="1.6" height="2.0" fill="#6a645c"/><rect x="48.8" y="-1.3" width="1.6" height="2.3" fill="#b8a898"/><rect x="17.3" y="35.2" width="1.3" height="1.2" fill="#524c46"/><rect x="110.2" y="36.0" width="3.0" height="2.2" fill="#b8a898"/><rect x="49.2" y="3.5" width="1.8" height="1.2" fill="#b8a898"/><rect x="38.4" y="32.2" width="2.8" height="2.4" fill="#8e867a"/><rect x="67.9" y="33.1" width="3.4" height="1.6" fill="#524c46"/><rect x="30.9" y="40.0" width="1.7" height="1.1" fill="#7a7064"/><rect x="45.3" y="43.4" width="2.0" height="1.2" fill="#524c46"/><rect x="100.8" y="2.3" width="2.5" height="1.9" fill="#b8a898"/><rect x="98.7" y="45.3" width="2.9" height="1.1" fill="#9a9080"/><rect x="57.5" y="14.1" width="3.0" height="1.8" fill="#a8a294"/><rect x="43.9" y="39.5" width="1.5" height="2.1" fill="#9a9080"/><rect x="116.2" y="23.6" width="2.6" height="1.6" fill="#524c46"/><rect x="23.8" y="51.4" width="1.3" height="1.3" fill="#6a645c"/><rect x="61.5" y="50.8" width="1.3" height="1.1" fill="#524c46"/><rect x="70.5" y="54.5" width="3.5" height="2.0" fill="#9a9080"/><rect x="47.5" y="18.0" width="2.8" height="1.1" fill="#c4beb2"/><rect x="100.3" y="21.0" width="2.0" height="2.3" fill="#524c46"/><rect x="77.0" y="2.0" width="3.0" height="1.1" fill="#5e665a"/><rect x="8.3" y="7.7" width="2.0" height="2.1" fill="#5e665a"/><rect x="112.9" y="50.7" width="2.6" height="1.0" fill="#7a7064"/><rect x="49.5" y="45.6" width="3.6" height="2.5" fill="#6a645c"/><rect x="19.2" y="3.8" width="2.8" height="1.2" fill="#7a7064"/><rect x="81.3" y="54.1" width="2.3" height="2.4" fill="#6a645c"/><rect x="100.8" y="65.0" width="2.1" height="2.3" fill="#6a645c"/><rect x="84.5" y="25.8" width="2.9" height="2.0" fill="#6a645c"/><rect x="111.4" y="12.8" width="2.2" height="1.9" fill="#6a645c"/><rect x="17.1" y="17.2" width="2.2" height="2.4" fill="#b8a898"/><rect x="22.6" y="47.2" width="2.4" height="1.7" fill="#b8a898"/><rect x="60.9" y="31.7" width="2.5" height="2.4" fill="#5e665a"/><rect x="37.9" y="-1.0" width="3.2" height="2.0" fill="#b8a898"/><rect x="70.7" y="34.4" width="2.1" height="1.9" fill="#7a7064"/><rect x="42.1" y="38.9" width="2.4" height="2.6" fill="#9a9080"/><rect x="9.1" y="32.3" width="2.7" height="1.6" fill="#b8a898"/><rect x="68.7" y="16.0" width="1.4" height="2.3" fill="#b8a898"/><rect x="27.9" y="12.9" width="3.4" height="1.1" fill="#8e867a"/><rect x="118.0" y="61.7" width="2.3" height="1.8" fill="#c4beb2"/><rect x="20.9" y="41.4" width="2.8" height="1.8" fill="#8e867a"/><rect x="2.3" y="46.9" width="2.6" height="1.9" fill="#9a9080"/><rect x="58.2" y="29.3" width="3.5" height="1.6" fill="#524c46"/><rect x="10.0" y="52.9" width="1.7" height="1.3" fill="#d8d2c8"/><rect x="88.7" y="22.1" width="1.6" height="1.3" fill="#8e867a"/><rect x="108.6" y="62.7" width="2.9" height="1.6" fill="#524c46"/><rect x="72.8" y="56.1" width="3.6" height="1.2" fill="#9a9080"/><rect x="0.5" y="35.6" width="1.8" height="1.5" fill="#524c46"/><rect x="67.0" y="16.4" width="1.4" height="1.0" fill="#524c46"/><rect x="114.0" y="8.7" width="2.1" height="2.3" fill="#d8d2c8"/><rect x="103.1" y="40.7" width="2.5" height="2.2" fill="#d8d2c8"/><rect x="90.3" y="47.2" width="2.6" height="2.0" fill="#524c46"/><rect x="4.7" y="63.6" width="2.1" height="2.3" fill="#c4beb2"/><rect x="57.2" y="46.0" width="2.0" height="1.3" fill="#9c7a6c"/><rect x="60.2" y="37.6" width="2.0" height="1.4" fill="#d8d2c8"/><rect x="11.6" y="63.8" width="2.8" height="1.1" fill="#a8a294"/><rect x="10.5" y="37.6" width="1.5" height="2.6" fill="#524c46"/><rect x="41.5" y="7.9" width="3.5" height="2.1" fill="#8e867a"/><rect x="1.6" y="38.0" width="3.6" height="2.1" fill="#d8d2c8"/><rect x="64.7" y="28.6" width="2.8" height="1.1" fill="#9a9080"/><rect x="73.3" y="62.8" width="3.3" height="1.2" fill="#8e867a"/><rect x="57.8" y="3.5" width="2.4" height="1.9" fill="#d8d2c8"/><rect x="9.0" y="61.0" width="1.8" height="1.4" fill="#524c46"/><rect x="113.5" y="66.3" width="3.5" height="2.5" fill="#b8a898"/><rect x="113.0" y="-0.6" width="2.4" height="1.9" fill="#9c7a6c"/><rect x="68.3" y="60.9" width="2.0" height="1.3" fill="#d8d2c8"/><rect x="17.3" y="61.9" width="1.5" height="1.5" fill="#524c46"/><rect x="115.7" y="-0.3" width="1.3" height="2.3" fill="#5e665a"/><rect x="61.9" y="38.6" width="3.0" height="2.3" fill="#a8a294"/><rect x="43.7" y="65.1" width="1.7" height="1.6" fill="#c4beb2"/><rect x="48.1" y="21.5" width="2.0" height="1.0" fill="#c4beb2"/><rect x="30.3" y="39.0" width="2.5" height="1.5" fill="#9c7a6c"/><rect x="41.3" y="43.6" width="3.4" height="1.7" fill="#c4beb2"/><rect x="16.4" y="15.7" width="2.3" height="2.3" fill="#9a9080"/><rect x="20.7" y="45.5" width="2.7" height="2.0" fill="#5e665a"/><rect x="29.4" y="59.4" width="1.6" height="1.4" fill="#524c46"/><rect x="60.7" y="49.8" width="1.7" height="1.1" fill="#c4beb2"/><rect x="64.4" y="3.5" width="3.0" height="1.4" fill="#c4beb2"/><rect x="3.5" y="37.0" width="1.5" height="2.1" fill="#6a645c"/><rect x="110.1" y="67.3" width="2.1" height="1.2" fill="#9c7a6c"/><rect x="94.2" y="21.7" width="3.1" height="1.6" fill="#524c46"/><rect x="67.2" y="64.1" width="1.4" height="2.6" fill="#a8a294"/><rect x="4.4" y="0.3" width="3.5" height="1.7" fill="#8e867a"/><rect x="15.6" y="12.4" width="3.3" height="2.5" fill="#9a9080"/><rect x="40.1" y="63.2" width="1.5" height="2.1" fill="#a8a294"/><rect x="21.7" y="7.5" width="2.8" height="2.4" fill="#9c7a6c"/><rect x="53.8" y="24.1" width="1.5" height="1.4" fill="#6a645c"/><rect x="119.0" y="48.8" width="2.8" height="1.2" fill="#9a9080"/><rect x="20.5" y="6.6" width="2.5" height="1.9" fill="#5e665a"/><rect x="52.4" y="54.2" width="1.8" height="1.1" fill="#9c7a6c"/><rect x="25.4" y="3.4" width="1.9" height="2.2" fill="#9c7a6c"/><rect x="60.0" y="9.2" width="2.0" height="1.9" fill="#524c46"/><rect x="57.5" y="60.5" width="2.6" height="1.6" fill="#7a7064"/><rect x="55.2" y="11.4" width="3.5" height="2.6" fill="#a8a294"/><rect x="52.0" y="38.9" width="2.5" height="1.5" fill="#a8a294"/><rect x="19.3" y="49.5" width="1.7" height="1.0" fill="#c4beb2"/><rect x="50.2" y="65.3" width="2.7" height="1.1" fill="#a8a294"/><rect x="20.5" y="-0.9" width="1.9" height="1.1" fill="#524c46"/><rect x="102.3" y="37.3" width="2.9" height="1.4" fill="#9a9080"/><rect x="18.5" y="8.1" width="2.6" height="2.0" fill="#b8a898"/><rect x="64.4" y="30.2" width="2.0" height="2.5" fill="#c4beb2"/><rect x="81.4" y="41.5" width="3.3" height="2.1" fill="#7a7064"/><rect x="60.6" y="66.9" width="1.9" height="1.3" fill="#9a9080"/><rect x="26.9" y="38.9" width="1.6" height="2.5" fill="#524c46"/><rect x="76.6" y="42.4" width="1.2" height="1.8" fill="#6a645c"/><rect x="59.2" y="62.6" width="2.4" height="1.6" fill="#a8a294"/><rect x="79.5" y="26.1" width="2.4" height="2.4" fill="#5e665a"/><rect x="54.9" y="4.3" width="2.4" height="1.8" fill="#9c7a6c"/><rect x="15.6" y="-0.1" width="2.5" height="1.1" fill="#524c46"/><rect x="96.4" y="14.4" width="3.2" height="2.3" fill="#524c46"/><rect x="22.0" y="42.3" width="1.4" height="1.6" fill="#a8a294"/><rect x="114.3" y="32.3" width="2.4" height="1.5" fill="#9c7a6c"/><rect x="59.9" y="22.0" width="1.7" height="1.3" fill="#7a7064"/><rect x="96.8" y="66.5" width="3.4" height="2.1" fill="#524c46"/><rect x="97.6" y="54.1" width="1.6" height="2.3" fill="#524c46"/><rect x="85.9" y="1.1" width="3.1" height="2.5" fill="#9c7a6c"/><rect x="40.2" y="53.4" width="2.7" height="2.5" fill="#9c7a6c"/><rect x="104.5" y="66.3" width="1.6" height="1.4" fill="#524c46"/><rect x="105.2" y="19.7" width="1.6" height="2.1" fill="#524c46"/><rect x="119.2" y="41.6" width="1.5" height="2.2" fill="#a8a294"/><rect x="51.7" y="26.5" width="2.1" height="2.2" fill="#a8a294"/><rect x="68.0" y="64.0" width="2.7" height="1.8" fill="#b8a898"/><rect x="85.5" y="0.7" width="3.3" height="1.8" fill="#c4beb2"/><rect x="26.4" y="41.3" width="1.5" height="1.2" fill="#b8a898"/><rect x="36.9" y="17.1" width="1.6" height="2.0" fill="#9c7a6c"/><rect x="92.9" y="5.2" width="2.0" height="1.1" fill="#a8a294"/><rect x="33.7" y="64.6" width="2.7" height="2.5" fill="#a8a294"/><rect x="39.0" y="17.6" width="2.5" height="1.8" fill="#a8a294"/><rect x="9.9" y="47.4" width="1.3" height="2.2" fill="#d8d2c8"/><rect x="28.7" y="11.9" width="2.6" height="1.4" fill="#9a9080"/><rect x="47.0" y="21.8" width="3.5" height="1.5" fill="#9c7a6c"/><rect x="63.4" y="13.1" width="3.4" height="2.3" fill="#6a645c"/><rect x="13.0" y="28.3" width="2.8" height="2.2" fill="#d8d2c8"/><rect x="97.5" y="62.7" width="2.4" height="2.5" fill="#5e665a"/><rect x="64.6" y="67.8" width="2.5" height="1.3" fill="#a8a294"/><rect x="73.7" y="10.9" width="3.5" height="2.3" fill="#5e665a"/><rect x="87.4" y="20.4" width="3.0" height="2.0" fill="#a8a294"/><rect x="54.2" y="28.3" width="1.5" height="1.8" fill="#524c46"/><rect x="107.3" y="1.9" width="1.4" height="1.4" fill="#5e665a"/><rect x="51.8" y="6.9" width="2.2" height="1.9" fill="#c4beb2"/><rect x="47.6" y="43.5" width="2.8" height="2.0" fill="#a8a294"/><rect x="8.7" y="37.5" width="1.8" height="1.9" fill="#b8a898"/><rect x="0.1" y="3.1" width="2.1" height="1.7" fill="#6a645c"/><rect x="23.6" y="15.2" width="3.0" height="2.6" fill="#9a9080"/><rect x="111.9" y="42.7" width="2.0" height="1.0" fill="#d8d2c8"/><rect x="69.0" y="49.7" width="3.3" height="1.3" fill="#a8a294"/><rect x="95.3" y="47.6" width="2.3" height="1.6" fill="#b8a898"/><rect x="23.2" y="28.5" width="1.7" height="1.0" fill="#524c46"/><rect x="74.5" y="4.2" width="3.0" height="2.0" fill="#d8d2c8"/><rect x="53.9" y="24.3" width="3.4" height="2.6" fill="#b8a898"/><rect x="107.0" y="3.2" width="1.7" height="1.4" fill="#5e665a"/><rect x="114.8" y="43.9" width="2.8" height="1.7" fill="#9c7a6c"/><rect x="34.7" y="40.1" width="1.4" height="1.9" fill="#9a9080"/><rect x="67.3" y="25.4" width="3.2" height="1.6" fill="#b8a898"/><rect x="29.9" y="40.9" width="1.7" height="1.6" fill="#c4beb2"/><rect x="89.9" y="28.4" width="2.4" height="1.1" fill="#c4beb2"/><rect x="101.0" y="25.4" width="2.6" height="2.1" fill="#9a9080"/><rect x="89.8" y="38.5" width="1.8" height="2.1" fill="#d8d2c8"/><rect x="48.1" y="9.0" width="1.3" height="2.2" fill="#5e665a"/><rect x="37.9" y="48.9" width="3.5" height="1.4" fill="#5e665a"/><rect x="40.2" y="64.7" width="2.0" height="2.5" fill="#7a7064"/><rect x="79.6" y="18.2" width="3.1" height="1.7" fill="#8e867a"/><rect x="10.1" y="1.4" width="2.3" height="1.9" fill="#7a7064"/><rect x="68.0" y="64.7" width="2.0" height="2.2" fill="#6a645c"/><rect x="-0.9" y="36.2" width="1.6" height="1.6" fill="#c4beb2"/><rect x="44.8" y="17.2" width="2.1" height="1.9" fill="#a8a294"/><rect x="64.4" y="25.8" width="2.2" height="2.3" fill="#9c7a6c"/><rect x="105.3" y="63.3" width="1.8" height="1.3" fill="#6a645c"/><rect x="110.0" y="42.6" width="1.3" height="1.3" fill="#a8a294"/><rect x="58.2" y="46.7" width="1.3" height="2.3" fill="#9a9080"/><rect x="24.0" y="47.2" width="2.9" height="1.5" fill="#c4beb2"/><rect x="102.0" y="47.1" width="1.3" height="2.5" fill="#5e665a"/><rect x="32.6" y="33.4" width="2.1" height="1.9" fill="#5e665a"/><rect x="74.2" y="8.5" width="3.5" height="1.5" fill="#7a7064"/><rect x="107.1" y="10.3" width="1.6" height="1.9" fill="#8e867a"/><rect x="56.2" y="40.3" width="2.0" height="2.2" fill="#9a9080"/><rect x="105.3" y="13.9" width="2.1" height="1.4" fill="#9c7a6c"/><rect x="3.8" y="46.7" width="1.4" height="2.3" fill="#d8d2c8"/><rect x="113.8" y="-0.3" width="2.0" height="1.9" fill="#7a7064"/><rect x="71.8" y="58.4" width="1.4" height="1.2" fill="#a8a294"/><rect x="109.8" y="41.0" width="2.5" height="1.1" fill="#8e867a"/><rect x="83.5" y="20.6" width="2.3" height="1.5" fill="#d8d2c8"/><rect x="0.5" y="15.5" width="1.2" height="2.5" fill="#524c46"/><rect x="30.1" y="-0.9" width="1.9" height="1.9" fill="#524c46"/><rect x="19.3" y="9.4" width="1.4" height="2.1" fill="#c4beb2"/><rect x="36.4" y="60.1" width="3.0" height="2.0" fill="#9c7a6c"/><rect x="52.6" y="48.3" width="1.8" height="2.3" fill="#9a9080"/><rect x="60.0" y="30.8" width="2.5" height="1.9" fill="#c4beb2"/><rect x="33.1" y="18.7" width="2.1" height="2.0" fill="#a8a294"/><rect x="74.3" y="18.0" width="1.7" height="2.4" fill="#d8d2c8"/><rect x="82.1" y="46.4" width="3.0" height="1.7" fill="#b8a898"/><rect x="59.6" y="13.9" width="2.6" height="2.0" fill="#c4beb2"/><rect x="7.1" y="15.3" width="3.5" height="1.9" fill="#d8d2c8"/><rect x="66.4" y="0.7" width="1.9" height="1.6" fill="#6a645c"/><rect x="63.4" y="5.9" width="3.3" height="2.3" fill="#9c7a6c"/><rect x="90.3" y="29.3" width="3.6" height="2.4" fill="#5e665a"/><rect x="91.8" y="39.4" width="2.6" height="1.3" fill="#7a7064"/><rect x="89.6" y="15.0" width="2.4" height="2.5" fill="#9c7a6c"/><rect x="64.9" y="21.6" width="2.6" height="2.0" fill="#a8a294"/><rect x="-0.5" y="48.5" width="3.4" height="2.0" fill="#c4beb2"/><rect x="91.7" y="21.4" width="3.5" height="1.9" fill="#6a645c"/><rect x="118.1" y="10.9" width="1.7" height="2.3" fill="#c4beb2"/><rect x="91.3" y="2.0" width="1.3" height="2.3" fill="#8e867a"/><rect x="95.3" y="42.4" width="3.0" height="2.4" fill="#9c7a6c"/><rect x="115.8" y="20.5" width="1.8" height="2.3" fill="#8e867a"/><rect x="37.3" y="6.1" width="1.2" height="2.1" fill="#5e665a"/><rect x="35.4" y="59.5" width="2.8" height="1.6" fill="#9c7a6c"/><rect x="20.8" y="32.7" width="3.5" height="1.4" fill="#524c46"/><rect x="31.3" y="12.0" width="1.4" height="1.4" fill="#c4beb2"/><rect x="44.9" y="63.5" width="2.8" height="1.2" fill="#9c7a6c"/><rect x="80.4" y="42.0" width="2.1" height="2.1" fill="#7a7064"/><rect x="-1.1" y="26.7" width="2.6" height="1.2" fill="#524c46"/><rect x="4.0" y="-0.0" width="3.6" height="1.6" fill="#9a9080"/><rect x="45.9" y="64.0" width="2.7" height="2.0" fill="#c4beb2"/><rect x="59.5" y="33.0" width="3.0" height="1.9" fill="#c4beb2"/><rect x="53.2" y="31.9" width="1.3" height="1.9" fill="#a8a294"/><rect x="14.0" y="24.8" width="1.7" height="1.7" fill="#b8a898"/><rect x="89.7" y="51.3" width="2.9" height="1.1" fill="#6a645c"/><rect x="16.2" y="9.4" width="1.3" height="1.0" fill="#9c7a6c"/><rect x="44.9" y="4.1" width="1.3" height="2.4" fill="#5e665a"/><rect x="119.6" y="54.2" width="2.6" height="1.4" fill="#8e867a"/><rect x="21.5" y="5.9" width="1.7" height="2.0" fill="#8e867a"/><rect x="6.7" y="55.9" width="3.1" height="1.7" fill="#b8a898"/><rect x="67.9" y="33.6" width="2.1" height="1.8" fill="#a8a294"/><rect x="119.5" y="-0.0" width="3.1" height="2.5" fill="#b8a898"/><rect x="107.2" y="39.1" width="2.1" height="1.9" fill="#9c7a6c"/><rect x="14.2" y="24.8" width="2.9" height="1.6" fill="#6a645c"/><rect x="109.7" y="0.9" width="1.9" height="1.5" fill="#6a645c"/><rect x="84.0" y="62.7" width="1.6" height="1.6" fill="#9a9080"/><rect x="92.2" y="5.9" width="3.6" height="2.2" fill="#9c7a6c"/><rect x="42.5" y="40.4" width="3.5" height="2.4" fill="#5e665a"/><rect x="107.4" y="17.4" width="1.8" height="1.8" fill="#524c46"/><rect x="116.1" y="8.1" width="2.2" height="1.9" fill="#8e867a"/><rect x="93.6" y="43.9" width="2.2" height="1.9" fill="#c4beb2"/><rect x="37.7" y="40.5" width="1.7" height="1.7" fill="#a8a294"/><rect x="30.3" y="23.6" width="2.9" height="1.3" fill="#524c46"/><rect x="22.4" y="37.0" width="2.0" height="1.0" fill="#a8a294"/><rect x="82.6" y="41.9" width="2.7" height="1.8" fill="#d8d2c8"/><rect x="76.4" y="2.6" width="2.9" height="1.4" fill="#7a7064"/><rect x="19.9" y="30.4" width="2.3" height="2.1" fill="#524c46"/><rect x="37.1" y="25.8" width="2.0" height="2.2" fill="#7a7064"/><rect x="64.2" y="41.3" width="3.4" height="2.0" fill="#c4beb2"/><rect x="13.5" y="39.9" width="2.8" height="1.7" fill="#8e867a"/><rect x="65.1" y="11.6" width="2.8" height="1.6" fill="#9c7a6c"/><rect x="5.2" y="4.9" width="1.3" height="1.7" fill="#524c46"/><rect x="82.1" y="36.3" width="3.3" height="1.6" fill="#6a645c"/><rect x="5.1" y="43.4" width="2.3" height="1.2" fill="#5e665a"/><rect x="17.9" y="2.5" width="2.5" height="1.2" fill="#5e665a"/><rect x="84.2" y="58.2" width="3.4" height="1.6" fill="#9c7a6c"/><rect x="87.6" y="59.9" width="2.5" height="1.9" fill="#a8a294"/><rect x="81.3" y="66.2" width="1.9" height="2.2" fill="#9c7a6c"/><rect x="50.2" y="12.8" width="2.3" height="2.4" fill="#7a7064"/><rect x="72.0" y="33.7" width="2.4" height="1.1" fill="#8e867a"/><rect x="42.2" y="23.6" width="1.4" height="2.5" fill="#524c46"/><rect x="7.1" y="40.6" width="2.2" height="1.4" fill="#9c7a6c"/><rect x="57.5" y="25.9" width="2.4" height="1.6" fill="#6a645c"/><rect x="3.7" y="26.0" width="1.4" height="2.1" fill="#8e867a"/><rect x="52.6" y="37.8" width="1.4" height="1.4" fill="#8e867a"/><rect x="52.7" y="18.7" width="2.1" height="2.4" fill="#c4beb2"/><rect x="87.6" y="-1.8" width="1.6" height="1.2" fill="#8e867a"/><rect x="14.7" y="60.3" width="3.0" height="1.1" fill="#9c7a6c"/><rect x="17.0" y="21.3" width="1.6" height="2.6" fill="#524c46"/><rect x="113.1" y="21.5" width="1.5" height="2.2" fill="#6a645c"/><rect x="66.0" y="66.3" width="2.0" height="1.6" fill="#c4beb2"/><rect x="99.9" y="61.8" width="1.6" height="1.8" fill="#524c46"/><rect x="110.8" y="12.6" width="2.7" height="1.1" fill="#8e867a"/><rect x="114.7" y="41.3" width="2.0" height="2.2" fill="#a8a294"/><rect x="98.4" y="14.7" width="3.2" height="1.8" fill="#d8d2c8"/><rect x="104.4" y="15.4" width="2.5" height="1.5" fill="#8e867a"/><rect x="71.2" y="16.4" width="1.8" height="2.1" fill="#c4beb2"/><rect x="55.0" y="6.3" width="1.4" height="1.3" fill="#b8a898"/><rect x="59.0" y="43.1" width="2.1" height="1.6" fill="#8e867a"/><rect x="25.7" y="40.5" width="1.8" height="1.1" fill="#d8d2c8"/><rect x="71.5" y="40.9" width="3.0" height="2.0" fill="#b8a898"/><rect x="48.0" y="43.4" width="2.1" height="1.7" fill="#9a9080"/><rect x="13.2" y="15.5" width="2.3" height="1.9" fill="#524c46"/><rect x="96.4" y="45.3" width="3.2" height="1.6" fill="#9c7a6c"/><rect x="3.5" y="24.9" width="2.6" height="2.6" fill="#8e867a"/><rect x="111.3" y="19.2" width="2.1" height="1.2" fill="#8e867a"/><rect x="118.6" y="35.2" width="2.7" height="1.9" fill="#7a7064"/><rect x="25.8" y="59.4" width="2.0" height="1.8" fill="#c4beb2"/><rect x="96.5" y="63.3" width="3.1" height="1.5" fill="#7a7064"/><rect x="1.7" y="42.7" width="3.1" height="1.5" fill="#c4beb2"/><rect x="-0.5" y="27.4" width="1.4" height="2.2" fill="#d8d2c8"/><rect x="-0.1" y="29.7" width="2.6" height="1.5" fill="#a8a294"/><rect x="61.5" y="28.7" width="1.8" height="1.2" fill="#5e665a"/><rect x="111.5" y="58.8" width="2.6" height="1.2" fill="#9c7a6c"/><rect x="9.1" y="37.0" width="1.4" height="1.1" fill="#b8a898"/><rect x="73.9" y="18.9" width="2.0" height="1.5" fill="#524c46"/><rect x="115.7" y="51.1" width="2.7" height="1.8" fill="#9a9080"/><rect x="80.3" y="9.1" width="2.5" height="1.7" fill="#d8d2c8"/><rect x="89.6" y="60.7" width="2.7" height="2.3" fill="#7a7064"/><rect x="9.4" y="8.2" width="1.3" height="1.3" fill="#524c46"/><rect x="12.0" y="7.8" width="1.6" height="1.9" fill="#9c7a6c"/><rect x="93.8" y="21.2" width="3.2" height="2.3" fill="#a8a294"/><rect x="58.6" y="24.5" width="3.4" height="1.3" fill="#9a9080"/><rect x="30.9" y="51.8" width="2.6" height="2.1" fill="#b8a898"/><rect x="38.4" y="43.8" width="2.2" height="1.1" fill="#a8a294"/><rect x="81.1" y="5.5" width="1.5" height="1.3" fill="#d8d2c8"/><rect x="64.3" y="32.3" width="3.5" height="1.3" fill="#9c7a6c"/><rect x="44.7" y="9.1" width="3.2" height="2.6" fill="#8e867a"/><rect x="84.5" y="59.1" width="2.4" height="1.9" fill="#9c7a6c"/><rect x="12.8" y="9.5" width="1.8" height="2.4" fill="#a8a294"/><rect x="56.3" y="6.9" width="2.0" height="1.4" fill="#9c7a6c"/><rect x="102.2" y="35.6" width="2.0" height="2.5" fill="#a8a294"/><rect x="55.5" y="23.9" width="2.3" height="2.1" fill="#9a9080"/><rect x="117.5" y="46.8" width="1.6" height="1.8" fill="#5e665a"/><rect x="42.2" y="0.3" width="1.4" height="1.7" fill="#c4beb2"/><rect x="101.0" y="0.1" width="2.0" height="1.6" fill="#524c46"/><path d="M38 -3 H121 V-1 L100 1 Q92 5 82 5 Q70 7 58 5.5 Q46 4 38 -3Z" fill="#5e9aa6"/><path d="M80 8 Q95 14 110 20 L121 26 V30 Q108 22 96 18 Q86 13 78 10Z" fill="#6a8a9a" opacity="0.85"/><ellipse cx="12" cy="34" rx="10" ry="6" fill="#4a5a30"/><ellipse cx="28" cy="36" rx="9" ry="5" fill="#3e5028"/><ellipse cx="22" cy="27" rx="6" ry="4" fill="#56663a"/><ellipse cx="50" cy="26" rx="5" ry="3" fill="#566a3a"/><ellipse cx="40" cy="46" rx="5" ry="3" fill="#4a5c30"/><ellipse cx="14" cy="64" rx="8" ry="3.5" fill="#5a6a36"/><ellipse cx="104" cy="40" rx="11" ry="5" fill="#4e6036"/><ellipse cx="110" cy="34" rx="7" ry="4" fill="#5a6c40"/><ellipse cx="8" cy="80" rx="5" ry="4" fill="#5a6a36"/><rect x="-2" y="36" width="6" height="28" fill="#d8d6d0"/><path d="M4 42 L20 40 L22 58 L6 60Z" fill="#8a8a88"/><rect x="19" y="40" width="8" height="12" fill="#c8c6c0"/><rect x="28" y="48" width="6" height="12" fill="#d0ccc4"/><rect x="22" y="54" width="5" height="10" fill="#e0ded8"/><path d="M36 40 L56 36 L62 48 L50 60 L38 56Z" fill="#645c52"/><path d="M42 44 L54 42 L56 50 L46 54Z" fill="#7a7266"/><path d="M60 34 L80 30 L90 40 L72 46Z" fill="#5a544c"/><path d="M62 37 L92 34 L98 50 L70 62 L62 52Z" fill="#9a9288"/><path d="M66 40 L88 38 L92 46 L70 50Z" fill="#b8b2a8"/><path d="M62 52 L70 62 L64 64 L58 56Z" fill="#5a544c"/><rect x="74" y="41" width="5" height="3" fill="#7a8aa0"/><rect x="82" y="40" width="4" height="2" fill="#7a8aa0"/><path d="M70 55 L92 52 L94 62 L72 64Z" fill="#dcdad4"/><path d="M74 57 L86 56 L86 60 L74 61Z" fill="#6a7a90"/><path d="M76 62 L100 58 L104 70 L78 70Z" fill="#8a6244"/><path d="M80 64 L100 61" stroke="#5a3e2a" stroke-width="0.8"/><path d="M96 48 L112 52 L112 66 L96 62Z" fill="#4a5468"/><path d="M98 52 L110 55 M98 56 L110 59 M98 60 L110 63" stroke="#7a88a0" stroke-width="0.7"/><rect x="115" y="52" width="7" height="16" fill="#c8c6c2"/><path d="M44 60 L62 58 L66 68 L44 68Z" fill="#aaa49a"/><rect x="-1" y="27" width="5" height="3" fill="#c06a5a"/><rect x="2" y="20" width="6" height="2" fill="#6a7aa0"/></g><path d="M112.5 38 V68" stroke="#c03a3a" stroke-width="0.8"/></g></svg>
<div class="abs" style="left:339.9px;top:142.7px;width:114.7px;height:12.1px;background:#3b6fd8"></div>
<div class="abs" style="left:339.9px;top:154.8px;width:77.4px;height:11.8px;background:#3b6fd8"></div>
<div class="t" style="left:341px;top:144.38px;font-size:10.3px;transform:scaleX(1.01);transform-origin:0 0;font-weight:700;color:#fff">Artificial Intelligence 4</div>
<div class="t" style="left:341px;top:156.18px;font-size:10.3px;transform:scaleX(1.01);transform-origin:0 0;font-weight:700;color:#fff">Animal Science</div>
<div class="abs" style="left:409px;top:180.6px;width:143px;height:117.4px;overflow:hidden;background:#2250b0">
<svg class="abs" style="left:0;top:34px" width="143" height="62.4" viewBox="0 0 143 62.4"><defs><filter id="gb" x="-0.05" y="-0.05" width="1.1" height="1.1"><feGaussianBlur stdDeviation="0.45"/></filter><linearGradient id="sky" x1="0" y1="0" x2="0" y2="1"><stop offset="0" stop-color="#2f6ee0"/><stop offset="0.6" stop-color="#5a94e8"/><stop offset="1" stop-color="#9abcec"/></linearGradient><linearGradient id="wat" x1="0" y1="0" x2="0" y2="1"><stop offset="0" stop-color="#8a9ab8"/><stop offset="1" stop-color="#3e5290"/></linearGradient></defs><g filter="url(#gb)"><rect x="-2" y="-2" width="147" height="67" fill="url(#sky)"/><ellipse cx="16" cy="2" rx="12" ry="3" fill="#eef2fa"/><ellipse cx="46" cy="14" rx="10" ry="3" fill="#f0f4fa"/><ellipse cx="92" cy="20" rx="12" ry="4" fill="#e8eef8"/><ellipse cx="96" cy="16.5" rx="6" ry="2.5" fill="#f4f6fb"/><path d="M-2 -2 H3 L7 6 V62 H-2Z" fill="#3e4658"/><rect x="0" y="14" width="3" height="4" fill="#8a98b0"/><rect x="0" y="26" width="3" height="4" fill="#8a98b0"/><path d="M6 8 L16 6 L24 5 L34 14 V46 H6Z" fill="#dcdce4"/><path d="M6 8 L16 6 L24 5 L30 11 L8 13Z" fill="#6a6a78"/><rect x="22" y="3" width="2.5" height="4" fill="#b05040"/><rect x="14" y="5" width="1.8" height="2.5" fill="#b05040"/><path d="M7 18 L14 17 L20 21 H7Z" fill="#d87848"/><rect x="7.5" y="21" width="10" height="17" fill="#c8a040"/><rect x="9" y="24" width="2" height="4" fill="#6a5a30"/><rect x="13" y="24" width="2" height="4" fill="#6a5a30"/><rect x="9" y="31" width="2" height="4" fill="#6a5a30"/><rect x="13" y="31" width="2" height="4" fill="#6a5a30"/><rect x="19" y="22" width="14" height="22" fill="#eeeef2"/><rect x="21" y="25" width="3" height="5" fill="#7a8098"/><rect x="27" y="25" width="3" height="5" fill="#7a8098"/><rect x="21" y="33" width="3" height="5" fill="#7a8098"/><rect x="27" y="33" width="3" height="5" fill="#7a8098"/><rect x="17" y="18" width="18" height="3" fill="#e8e8ee"/><path d="M28 8 L38 10 L48 16 V46 H32 V14Z" fill="#7888b0"/><path d="M28 8 L38 10 L46 15 L32 15Z" fill="#4a4a5a"/><rect x="34" y="20" width="3" height="4" fill="#d8dce8"/><rect x="40" y="20" width="3" height="4" fill="#d8dce8"/><rect x="34" y="30" width="3" height="4" fill="#d8dce8"/><rect x="40" y="30" width="3" height="4" fill="#d8dce8"/><path d="M46 20 L52 17 L58 22 V44 H46Z" fill="#8a98c0"/><path d="M46 20 L52 17 L58 22 H46Z" fill="#c07048"/><path d="M56 24 L62 21 L66 26 V42 H56Z" fill="#a86050"/><rect x="58" y="28" width="2" height="3" fill="#e8d8c8"/><ellipse cx="75" cy="30" rx="8.5" ry="12" fill="#3a7a2c"/><ellipse cx="72" cy="36" rx="6" ry="7" fill="#2e6a22"/><ellipse cx="78" cy="24" rx="4" ry="5" fill="#5a9a3a"/><path d="M83 30 L90 26 L96 30 V42 H83Z" fill="#9a7868"/><path d="M92 28 L98 24 L102 28 V42 H92Z" fill="#b89878"/><path d="M99 19 L105 17 L108 22 V42 H99Z" fill="#c86838"/><rect x="100" y="24" width="8" height="18" fill="#a88070"/><path d="M106 16 L120 6 L128 4 V58 H106Z" fill="#c8ccd4"/><path d="M106 16 L120 6 L128 4 V8 L108 18Z" fill="#5a6278"/><rect x="109" y="20" width="16" height="1.6" fill="#8a92a8"/><rect x="109" y="30" width="16" height="1.6" fill="#8a92a8"/><rect x="109" y="40" width="16" height="1.6" fill="#8a92a8"/><rect x="110" y="22" width="2" height="6" fill="#6a7088"/><rect x="115" y="22" width="2" height="6" fill="#6a7088"/><rect x="120" y="22" width="2" height="6" fill="#6a7088"/><rect x="110" y="33" width="2" height="6" fill="#6a7088"/><rect x="115" y="33" width="2" height="6" fill="#6a7088"/><rect x="120" y="33" width="2" height="6" fill="#6a7088"/><rect x="127" y="-2" width="18" height="66" fill="#8a8e9a"/><rect x="128" y="6" width="15" height="4" fill="#3a4a78"/><rect x="128" y="24" width="15" height="3.5" fill="#3a4a78"/><rect x="129" y="30" width="2.5" height="20" fill="#d8d8dc"/><rect x="134" y="30" width="2.5" height="20" fill="#d8d8dc"/><rect x="139" y="30" width="2.5" height="20" fill="#d8d8dc"/><rect x="129" y="12" width="2.5" height="10" fill="#c8c8d0"/><rect x="135" y="12" width="2.5" height="10" fill="#c8c8d0"/><path d="M36 44 L102 40 L106 50 L112 63 H40Z" fill="url(#wat)"/><path d="M56 47 L96 45 L97 48 L58 50Z" fill="#a8b8d0" opacity="0.6"/><path d="M70 41 H100 V43 H70Z" fill="#8a9070"/><ellipse cx="97" cy="44" rx="6" ry="4" fill="#4a8a3a"/><rect x="104" y="44" width="6" height="5" fill="#6aa070"/><path d="M22 44 L48 42 L50 48 L26 54Z" fill="#4a4a50"/><rect x="38" y="46" width="12" height="4" fill="#c04848"/><rect x="42" y="50" width="14" height="3" fill="#8a5a48"/><rect x="99" y="52" width="15" height="4.5" fill="#d83a48"/><rect x="104" y="56.5" width="14" height="6" fill="#d07038"/><rect x="114" y="50" width="13" height="13" fill="#6a6a6a"/></g></svg>
<div class="abs" style="left:0;top:96.4px;width:143px;height:21px;background:#2250b0"></div>
<div class="abs" style="left:5.6px;top:5.4px;width:24px;height:24.4px;border-radius:50%;background:#fff"></div>
<svg class="abs" style="left:5.6px;top:5.4px" width="24" height="24.4" viewBox="0 0 24 24.4"><path d="M6 19 A10 10 0 0 1 16 6 M8.5 19 A8 8 0 0 1 16.5 8.8 M11 19 A6 6 0 0 1 17 11.6 M13.5 19 A4 4 0 0 1 17.5 14.4" stroke="#1c3478" stroke-width="1.5" fill="none"/><path d="M5 19.5 H18" stroke="#1c3478" stroke-width="0.6"/></svg>
</div>
<div class="t" style="left:448.6px;top:186.07px;font-size:7px;color:#fff">2nd EAAP Conference on</div>
<div class="t" style="left:489px;top:195.05px;font-size:7.5px;transform:translateX(-50%);transform-origin:0 0;color:#f28a3c;font-weight:700;font-style:italic;-webkit-text-stroke:0.15px #f28a3c">Artificial Intelligence</div>
<div class="t" style="left:490px;top:205.25px;font-size:7.5px;transform:translateX(-50%) scaleX(0.95);transform-origin:50% 0;color:#f28a3c;font-weight:700;font-style:italic;-webkit-text-stroke:0.15px #f28a3c">4 Animal Science</div>
<div class="t" style="left:493.6px;top:280.75px;font-size:7.5px;transform:translateX(-50%) scaleX(0.84);transform-origin:50% 0;color:#fff;font-weight:700">GHENT, BELGIUM</div>
<div class="t" style="left:493.7px;top:288.15px;font-size:7.5px;transform:translateX(-50%) scaleX(0.94);transform-origin:50% 0;color:#fff;font-weight:700">29-30 JUNE 2026</div>
<svg class="abs" style="left:0;top:0" width="750" height="422" viewBox="0 0 750 422"><defs><clipPath id="cc"><rect x="409" y="180.6" width="143" height="117.4"/></clipPath></defs><polygon clip-path="url(#cc)" points="457.50,272.80 455.71,274.32 457.20,276.05 455.16,277.32 456.30,279.23 454.05,280.20 454.83,282.24 452.43,282.91 452.82,285.03 450.33,285.36 450.32,287.51 447.80,287.51 447.40,289.63 444.91,289.29 444.12,291.33 441.72,290.67 440.57,292.58 438.32,291.61 436.83,293.34 434.79,292.08 433.00,293.60 431.21,292.08 429.17,293.34 427.68,291.61 425.43,292.58 424.28,290.67 421.88,291.33 421.09,289.29 418.60,289.63 418.20,287.51 415.68,287.51 415.67,285.36 413.18,285.03 413.57,282.91 411.17,282.24 411.95,280.20 409.70,279.23 410.84,277.32 408.80,276.05 410.29,274.32 408.50,272.80 410.29,271.28 408.80,269.55 410.84,268.28 409.70,266.37 411.95,265.40 411.17,263.36 413.57,262.69 413.18,260.57 415.67,260.24 415.68,258.09 418.20,258.09 418.60,255.97 421.09,256.31 421.88,254.27 424.28,254.93 425.43,253.02 427.68,253.99 429.17,252.26 431.21,253.52 433.00,252.00 434.79,253.52 436.83,252.26 438.32,253.99 440.57,253.02 441.72,254.93 444.12,254.27 444.91,256.31 447.40,255.97 447.80,258.09 450.32,258.09 450.33,260.24 452.82,260.57 452.43,262.69 454.83,263.36 454.05,265.40 456.30,266.37 455.16,268.28 457.20,269.55 455.71,271.28" fill="#f28c4e"/></svg>
<div class="t" style="left:424.5px;top:259.61px;font-size:4.6px;color:#fde8d8;transform:rotate(22deg);transform-origin:0 100%">Abstract</div>
<div class="t" style="left:417.5px;top:265.61px;font-size:4.6px;color:#fde8d8;transform:rotate(22deg);transform-origin:0 100%">Submission</div>
<div class="t" style="left:421.5px;top:274.11px;font-size:4.6px;color:#fde8d8;transform:rotate(22deg);transform-origin:0 100%">open</div>
<div class="t" style="left:14.3px;top:317.59px;width:554.9px;font-family:'Liberation Serif',serif;font-size:14.7px;color:#111;-webkit-text-stroke:0.2px #111;text-align:justify;text-align-last:justify"><b>Рис. 1</b> Інвестиції у штучний інтелект за галузями промисловості: середня частка</div>
<div class="t" style="left:14.3px;top:335.29px;width:554.9px;font-family:'Liberation Serif',serif;font-size:14.7px;color:#111;-webkit-text-stroke:0.2px #111;text-align:justify;text-align-last:justify">працівників, пов'язаних зі штучним інтелектом, та вакансій у різних галузях</div>
<div class="t" style="left:14.3px;top:353.29px;font-family:'Liberation Serif',serif;font-size:14.7px;color:#1a1a1a">промисловості США, 2007–2018 роки. (<span style="color:#2468c0;text-decoration:underline">Babina et al., 2024 </span>)</div>
<div class="abs" style="left:0;top:369.1px;width:600px;height:14px;background:#14171a"></div>
<svg class="abs" style="left:611.9px;top:43.6px" width="63.4" height="36" viewBox="0 0 63.4 36"><defs><filter id="vb"><feGaussianBlur stdDeviation="0.45"/></filter><clipPath id="v1c"><rect width="63.4" height="36" rx="2"/></clipPath><linearGradient id="v1s" x1="0" y1="0" x2="0" y2="1"><stop offset="0" stop-color="#4f86dc"/><stop offset="1" stop-color="#9ab8e0"/></linearGradient></defs><g clip-path="url(#v1c)"><g filter="url(#vb)"><rect x="-2" y="-2" width="68" height="40" fill="url(#v1s)"/><ellipse cx="52" cy="6" rx="9" ry="2.5" fill="#c8d8f0"/><ellipse cx="58" cy="14" rx="6" ry="2" fill="#d8e4f4"/><path d="M-2 7 L6 4 L18 5 L24 8 V34 H-2Z" fill="#d6c8aa"/><path d="M-2 4 L6 2 L20 3 L24 7 H-2Z" fill="#8a8a90"/><rect x="2" y="11" width="2" height="3" fill="#7a8aa0"/><rect x="8" y="11" width="2" height="3" fill="#7a8aa0"/><rect x="14" y="11" width="2" height="3" fill="#7a8aa0"/><rect x="2" y="19" width="2" height="3" fill="#7a8aa0"/><rect x="8" y="19" width="2" height="3" fill="#7a8aa0"/><rect x="14" y="19" width="2" height="3" fill="#7a8aa0"/><rect x="9" y="20" width="6" height="10" fill="#3e5a3a"/><path d="M42 13 L52 16 L64 18 V36 H42Z" fill="#d0c4b0"/><path d="M42 11 L52 14 L64 16 V19 L42 15Z" fill="#6a6a72"/><rect x="47" y="21" width="2" height="3" fill="#8a8a90"/><rect x="54" y="22" width="2" height="3" fill="#8a8a90"/><rect x="47" y="27" width="2" height="3" fill="#8a8a90"/><rect x="54" y="28" width="2" height="3" fill="#8a8a90"/><path d="M20 36 L26 28 H48 L58 36Z" fill="#263434"/><ellipse cx="33" cy="18" rx="12" ry="15" fill="#c48e78"/><ellipse cx="35" cy="12" rx="7.5" ry="6.5" fill="#dcae98"/><ellipse cx="22" cy="19" rx="2" ry="3.5" fill="#b88068"/><path d="M22 10 Q22 1 33 1 Q44 1 44 8 Q38 5 30 6 Q25 7 24 14Z" fill="#2e221c"/><rect x="23.5" y="14" width="9" height="5.2" rx="2" fill="#6a5a90" fill-opacity="0.45" stroke="#2a2028" stroke-width="1"/><rect x="34.5" y="14" width="9" height="5.2" rx="2" fill="#6a5a90" fill-opacity="0.45" stroke="#2a2028" stroke-width="1"/><ellipse cx="33.5" cy="28.5" rx="4" ry="1.8" fill="#9a5a50"/></g></g></svg>
<div class="abs" style="left:611.4px;top:43.1px;width:64.4px;height:37px;border:1.1px solid #2ed27a;border-radius:2.5px"></div>
<svg class="abs" style="left:675.3px;top:43.6px" width="61.6" height="36" viewBox="0 0 61.6 36"><defs><clipPath id="v2c"><rect width="61.6" height="36" rx="2"/></clipPath></defs><g clip-path="url(#v2c)"><g filter="url(#vb)"><rect x="-2" y="-2" width="66" height="40" fill="#dcddd0"/><rect x="-2" y="-2" width="21" height="40" fill="#e2dcc8"/><path d="M3 4 Q8 1 12 5 Q15 9 10 12 Q5 14 6 20 M12 16 Q17 20 14 26 M2 24 Q6 28 4 33 M14 3 Q16 6 17 4" fill="none" stroke="#8a8468" stroke-width="0.7"/><rect x="44" y="-2" width="20" height="40" fill="#d2d6c8"/><ellipse cx="53" cy="26" rx="7" ry="6" fill="#7a9a5a" opacity="0.8"/><path d="M50 30 L53 18 M55 30 L58 20" stroke="#5a7a3a" stroke-width="1"/><path d="M20 36 V16 Q20 5 33 5 Q46 5 46 16 V36Z" fill="#322824"/><ellipse cx="34" cy="21" rx="9.5" ry="11" fill="#c8a08a"/><ellipse cx="34" cy="17" rx="6" ry="5" fill="#d8b4a0"/><path d="M28 19 H31 M37 19 H40" stroke="#5a4038" stroke-width="1"/><path d="M16 36 Q20 31 34 31 Q48 31 50 36Z" fill="#3a3034"/></g></g></svg>
<div class="abs" style="left:612.6px;top:72px;width:45.5px;height:6.6px;background:rgba(16,16,18,0.62);border-radius:1px"></div>
<div class="t" style="left:614px;top:72.97px;font-size:5px;color:#e8e8ee">Mykhailo Matyasev</div>
<div class="abs" style="left:676.2px;top:72px;width:60.3px;height:6.6px;background:rgba(16,16,18,0.66);border-radius:1px"></div>
<svg class="abs" style="left:677px;top:72.4px" width="6" height="6" viewBox="0 0 6 6"><rect x="2" y="0.4" width="2" height="3.2" rx="1" fill="#e8384a"/><path d="M1.2 2.6 Q1.2 4.6 3 4.6 Q4.8 4.6 4.8 2.6 M3 4.6 V5.6" fill="none" stroke="#e8384a" stroke-width="0.6"/><path d="M0.6 5.4 L5.4 0.6" stroke="#e8384a" stroke-width="0.8"/></svg>
<div class="t" style="left:682.8px;top:72.97px;font-size:5px;color:#e8e8ee">Руслана Уманець НУ...</div>
<svg class="abs" style="left:629.4px;top:82.80px" width="28.4" height="25" viewBox="0 0 28.4 25"><defs><clipPath id="ac00"><rect width="28.4" height="25" rx="1.8"/></clipPath></defs><g clip-path="url(#ac00)"><g filter="url(#vb)"><rect x="-2" y="-2" width="33" height="29" fill="#d8d0c0"/><rect x="12" y="-2" width="18" height="10" fill="#6a8a4e"/><rect x="16" y="6" width="10" height="8" fill="#c8b898"/><rect x="19" y="8" width="3" height="3" fill="#3a3a3a"/><path d="M-2 -2 H10 Q14 4 13 12 L10 25 H-2Z" fill="#e8e4dc"/><path d="M2 4 Q6 2 9 6 L8 14 Q4 12 2 8Z" fill="#f4f2ee"/><ellipse cx="4" cy="12" rx="2" ry="2.5" fill="#b8b0a8"/><path d="M13 14 Q13 8 17.5 8 Q22 8 22 14 V18 H13Z" fill="#3a2a24"/><ellipse cx="17.5" cy="14" rx="3" ry="3.6" fill="#e0b8a0"/><path d="M11 25 Q12 18 17.5 18 Q23 18 24 25Z" fill="#8a3040"/><circle cx="15" cy="21" r="1" fill="#e8e0d0"/><circle cx="20" cy="22" r="1" fill="#50a060"/></g></g></svg>
<div class="abs" style="left:613.4px;top:106.6px;width:53.4px;height:7px;background:#26272b;border-radius:1.5px"></div>
<svg class="abs" style="left:614.0px;top:107.19999999999999px" width="6" height="6" viewBox="0 0 6 6"><rect x="2" y="0.4" width="2" height="3.2" rx="1" fill="#e8384a"/><path d="M1.2 2.6 Q1.2 4.6 3 4.6 Q4.8 4.6 4.8 2.6 M3 4.6 V5.6" fill="none" stroke="#e8384a" stroke-width="0.6"/><path d="M0.6 5.4 L5.4 0.6" stroke="#e8384a" stroke-width="0.8"/></svg>
<div class="t" style="left:621.6px;top:107.67px;font-size:5px;color:#d0d0d4">Ludmyla Ziamaniuk</div>
<div class="t" style="left:706.1px;top:94.91px;font-size:5.9px;transform:translateX(-50%);transform-origin:0 0;color:#f4f4f4;font-weight:700">Валентин&nbsp; Гонча...</div>
<div class="abs" style="left:675.9px;top:106.6px;width:59.4px;height:7px;background:#26272b;border-radius:1.5px"></div>
<svg class="abs" style="left:676.5px;top:107.19999999999999px" width="6" height="6" viewBox="0 0 6 6"><rect x="2" y="0.4" width="2" height="3.2" rx="1" fill="#e8384a"/><path d="M1.2 2.6 Q1.2 4.6 3 4.6 Q4.8 4.6 4.8 2.6 M3 4.6 V5.6" fill="none" stroke="#e8384a" stroke-width="0.6"/><path d="M0.6 5.4 L5.4 0.6" stroke="#e8384a" stroke-width="0.8"/></svg>
<div class="t" style="left:684.1px;top:107.67px;font-size:5px;color:#d0d0d4">Валентин Гончаренко</div>
<svg class="abs" style="left:629.4px;top:117.96px" width="28.4" height="25" viewBox="0 0 28.4 25"><defs><clipPath id="ac10"><rect width="28.4" height="25" rx="1.8"/></clipPath></defs><g clip-path="url(#ac10)"><g filter="url(#vb)"><rect x="-2" y="-2" width="33" height="29" fill="#5a6238"/><rect x="20" y="-2" width="10" height="29" fill="#8a8050"/><rect x="-2" y="-2" width="8" height="12" fill="#3a4228"/><path d="M4 25 Q2 10 8 4 Q14 0 20 4 Q26 10 24 25Z" fill="#d890a4"/><ellipse cx="13" cy="13" rx="4.5" ry="6" fill="#f0d0c0"/><path d="M9 25 Q10 19 14 19 Q18 19 19 25Z" fill="#e8c0b0"/><path d="M17 4 Q24 8 23 20" stroke="#e8a8b8" stroke-width="2" fill="none"/></g></g></svg>
<div class="abs" style="left:613.4px;top:141.76px;width:47.1px;height:7px;background:#26272b;border-radius:1.5px"></div>
<svg class="abs" style="left:614.0px;top:142.35999999999999px" width="6" height="6" viewBox="0 0 6 6"><rect x="2" y="0.4" width="2" height="3.2" rx="1" fill="#e8384a"/><path d="M1.2 2.6 Q1.2 4.6 3 4.6 Q4.8 4.6 4.8 2.6 M3 4.6 V5.6" fill="none" stroke="#e8384a" stroke-width="0.6"/><path d="M0.6 5.4 L5.4 0.6" stroke="#e8384a" stroke-width="0.8"/></svg>
<div class="t" style="left:621.6px;top:142.83px;font-size:5px;color:#d0d0d4">Дарiйка Кобиця</div>
<svg class="abs" style="left:691.9px;top:117.96px" width="28.4" height="25" viewBox="0 0 28.4 25"><defs><clipPath id="ac11"><rect width="28.4" height="25" rx="1.8"/></clipPath></defs><g clip-path="url(#ac11)"><g filter="url(#vb)"><rect x="-2" y="-2" width="33" height="29" fill="#d8d2c4"/><rect x="-2" y="-2" width="33" height="5" fill="#f0ece4"/><rect x="-2" y="14" width="33" height="2" fill="#b8b2a4"/><rect x="-2" y="6" width="33" height="1.2" fill="#a8a8a0"/><path d="M8 8 Q12 4 16 5 Q21 6 20 12 L18 25 H11 L10 14 Q7 12 8 8Z" fill="#3a2c22"/><path d="M12 12 Q14 10 16 12 L15.5 25 H12.5Z" fill="#a88068"/><path d="M6 9 L9 6 M19 7 L22 4" stroke="#3a2c22" stroke-width="1.2"/></g></g></svg>
<div class="abs" style="left:675.9px;top:141.76px;width:58.1px;height:7px;background:#26272b;border-radius:1.5px"></div>
<svg class="abs" style="left:676.5px;top:142.35999999999999px" width="6" height="6" viewBox="0 0 6 6"><rect x="2" y="0.4" width="2" height="3.2" rx="1" fill="#e8384a"/><path d="M1.2 2.6 Q1.2 4.6 3 4.6 Q4.8 4.6 4.8 2.6 M3 4.6 V5.6" fill="none" stroke="#e8384a" stroke-width="0.6"/><path d="M0.6 5.4 L5.4 0.6" stroke="#e8384a" stroke-width="0.8"/></svg>
<div class="t" style="left:684.1px;top:142.83px;font-size:5px;color:#d0d0d4">Володимир Малюкін</div>
<div class="t" style="left:643.6px;top:165.23px;font-size:5.9px;transform:translateX(-50%);transform-origin:0 0;color:#f4f4f4;font-weight:700">Артем&nbsp; Голінськ...</div>
<div class="abs" style="left:613.4px;top:176.92px;width:50.6px;height:7px;background:#26272b;border-radius:1.5px"></div>
<svg class="abs" style="left:614.0px;top:177.51999999999998px" width="6" height="6" viewBox="0 0 6 6"><rect x="2" y="0.4" width="2" height="3.2" rx="1" fill="#e8384a"/><path d="M1.2 2.6 Q1.2 4.6 3 4.6 Q4.8 4.6 4.8 2.6 M3 4.6 V5.6" fill="none" stroke="#e8384a" stroke-width="0.6"/><path d="M0.6 5.4 L5.4 0.6" stroke="#e8384a" stroke-width="0.8"/></svg>
<div class="t" style="left:621.6px;top:177.99px;font-size:5px;color:#d0d0d4">Артем Голінський</div>
<div class="t" style="left:706.1px;top:165.23px;font-size:5.9px;transform:translateX(-50%);transform-origin:0 0;color:#f4f4f4;font-weight:700">Іванько Ілля</div>
<div class="abs" style="left:675.9px;top:176.92px;width:37.7px;height:7px;background:#26272b;border-radius:1.5px"></div>
<svg class="abs" style="left:676.5px;top:177.51999999999998px" width="6" height="6" viewBox="0 0 6 6"><rect x="2" y="0.4" width="2" height="3.2" rx="1" fill="#e8384a"/><path d="M1.2 2.6 Q1.2 4.6 3 4.6 Q4.8 4.6 4.8 2.6 M3 4.6 V5.6" fill="none" stroke="#e8384a" stroke-width="0.6"/><path d="M0.6 5.4 L5.4 0.6" stroke="#e8384a" stroke-width="0.8"/></svg>
<div class="t" style="left:684.1px;top:177.99px;font-size:5px;color:#d0d0d4">Іванько Ілля</div>
<div class="t" style="left:643.6px;top:200.39px;font-size:5.9px;transform:translateX(-50%);transform-origin:0 0;color:#f4f4f4;font-weight:700">Рома Яценко</div>
<div class="abs" style="left:613.4px;top:212.07999999999998px;width:41.4px;height:7px;background:#26272b;border-radius:1.5px"></div>
<svg class="abs" style="left:614.0px;top:212.67999999999998px" width="6" height="6" viewBox="0 0 6 6"><rect x="2" y="0.4" width="2" height="3.2" rx="1" fill="#e8384a"/><path d="M1.2 2.6 Q1.2 4.6 3 4.6 Q4.8 4.6 4.8 2.6 M3 4.6 V5.6" fill="none" stroke="#e8384a" stroke-width="0.6"/><path d="M0.6 5.4 L5.4 0.6" stroke="#e8384a" stroke-width="0.8"/></svg>
<div class="t" style="left:621.6px;top:213.15px;font-size:5px;color:#d0d0d4">Рома Яценко</div>
<div class="t" style="left:706.1px;top:200.39px;font-size:5.9px;transform:translateX(-50%);transform-origin:0 0;color:#f4f4f4;font-weight:700">Сурменко&nbsp; Олек...</div>
<div class="abs" style="left:675.9px;top:212.07999999999998px;width:59.9px;height:7px;background:#26272b;border-radius:1.5px"></div>
<svg class="abs" style="left:676.5px;top:212.67999999999998px" width="6" height="6" viewBox="0 0 6 6"><rect x="2" y="0.4" width="2" height="3.2" rx="1" fill="#e8384a"/><path d="M1.2 2.6 Q1.2 4.6 3 4.6 Q4.8 4.6 4.8 2.6 M3 4.6 V5.6" fill="none" stroke="#e8384a" stroke-width="0.6"/><path d="M0.6 5.4 L5.4 0.6" stroke="#e8384a" stroke-width="0.8"/></svg>
<div class="t" style="left:684.1px;top:213.15px;font-size:5px;color:#d0d0d4">Сурменко Олександр</div>
<div class="t" style="left:643.6px;top:235.55px;font-size:5.9px;transform:translateX(-50%);transform-origin:0 0;color:#f4f4f4;font-weight:700">Тарасенко Іван</div>
<div class="abs" style="left:613.4px;top:247.23999999999998px;width:45.4px;height:7px;background:#26272b;border-radius:1.5px"></div>
<svg class="abs" style="left:614.0px;top:247.83999999999997px" width="6" height="6" viewBox="0 0 6 6"><rect x="2" y="0.4" width="2" height="3.2" rx="1" fill="#e8384a"/><path d="M1.2 2.6 Q1.2 4.6 3 4.6 Q4.8 4.6 4.8 2.6 M3 4.6 V5.6" fill="none" stroke="#e8384a" stroke-width="0.6"/><path d="M0.6 5.4 L5.4 0.6" stroke="#e8384a" stroke-width="0.8"/></svg>
<div class="t" style="left:621.6px;top:248.31px;font-size:5px;color:#d0d0d4">Тарасенко Іван</div>
<div class="t" style="left:706.1px;top:235.55px;font-size:5.9px;transform:translateX(-50%);transform-origin:0 0;color:#f4f4f4;font-weight:700">Штурмак Євгеній</div>
<div class="abs" style="left:675.9px;top:247.23999999999998px;width:49.1px;height:7px;background:#26272b;border-radius:1.5px"></div>
<svg class="abs" style="left:676.5px;top:247.83999999999997px" width="6" height="6" viewBox="0 0 6 6"><rect x="2" y="0.4" width="2" height="3.2" rx="1" fill="#e8384a"/><path d="M1.2 2.6 Q1.2 4.6 3 4.6 Q4.8 4.6 4.8 2.6 M3 4.6 V5.6" fill="none" stroke="#e8384a" stroke-width="0.6"/><path d="M0.6 5.4 L5.4 0.6" stroke="#e8384a" stroke-width="0.8"/></svg>
<div class="t" style="left:684.1px;top:248.31px;font-size:5px;color:#d0d0d4">Штурмак Євгеній</div>
<div class="t" style="left:643.6px;top:270.71px;font-size:5.9px;transform:translateX(-50%);transform-origin:0 0;color:#f4f4f4;font-weight:700">єгор</div>
<div class="abs" style="left:613.4px;top:282.4px;width:18.6px;height:7px;background:#26272b;border-radius:1.5px"></div>
<svg class="abs" style="left:614.0px;top:283.0px" width="6" height="6" viewBox="0 0 6 6"><rect x="2" y="0.4" width="2" height="3.2" rx="1" fill="#e8384a"/><path d="M1.2 2.6 Q1.2 4.6 3 4.6 Q4.8 4.6 4.8 2.6 M3 4.6 V5.6" fill="none" stroke="#e8384a" stroke-width="0.6"/><path d="M0.6 5.4 L5.4 0.6" stroke="#e8384a" stroke-width="0.8"/></svg>
<div class="t" style="left:621.6px;top:283.47px;font-size:5px;color:#d0d0d4">єгор</div>
<div class="abs" style="left:692.1px;top:259.70px;width:28.1px;height:27.5px;border-radius:2px;background:#e8487e"></div>
<div class="t" style="left:706.1px;top:268.21px;font-size:10.5px;transform:translateX(-50%);transform-origin:0 0;color:#fff">O</div>
<div class="abs" style="left:675.9px;top:282.4px;width:34.9px;height:7px;background:#26272b;border-radius:1.5px"></div>
<svg class="abs" style="left:676.5px;top:283.0px" width="6" height="6" viewBox="0 0 6 6"><rect x="2" y="0.4" width="2" height="3.2" rx="1" fill="#e8384a"/><path d="M1.2 2.6 Q1.2 4.6 3 4.6 Q4.8 4.6 4.8 2.6 M3 4.6 V5.6" fill="none" stroke="#e8384a" stroke-width="0.6"/><path d="M0.6 5.4 L5.4 0.6" stroke="#e8384a" stroke-width="0.8"/></svg>
<div class="t" style="left:684.1px;top:283.47px;font-size:5px;color:#d0d0d4">ольга Крук</div>
<svg class="abs" style="left:629.4px;top:293.76px" width="28.4" height="25" viewBox="0 0 28.4 25"><defs><clipPath id="ac60"><rect width="28.4" height="25" rx="1.8"/></clipPath></defs><g clip-path="url(#ac60)"><g filter="url(#vb)"><rect x="-2" y="-2" width="33" height="29" fill="#f6f4f2"/><path d="M8 8 Q7 2 10 3 L12 6 Q14 5 16 6 L18 3 Q21 2 20 8 Q22 14 19 20 L18 25 H10 L9 20 Q6 14 8 8Z" fill="none" stroke="#a8a0a0" stroke-width="0.5"/><ellipse cx="10.5" cy="4" rx="1" ry="1.3" fill="#e8b0b0"/><ellipse cx="17.5" cy="4" rx="1" ry="1.3" fill="#e8b0b0"/><path d="M10 12 H12 M16 12 H18 M9 16 Q14 19 19 16" stroke="#b0a8a8" stroke-width="0.4" fill="none"/></g></g></svg>
<div class="abs" style="left:613.4px;top:317.55999999999995px;width:47.1px;height:7px;background:#26272b;border-radius:1.5px"></div>
<svg class="abs" style="left:614.0px;top:318.15999999999997px" width="6" height="6" viewBox="0 0 6 6"><rect x="2" y="0.4" width="2" height="3.2" rx="1" fill="#e8384a"/><path d="M1.2 2.6 Q1.2 4.6 3 4.6 Q4.8 4.6 4.8 2.6 M3 4.6 V5.6" fill="none" stroke="#e8384a" stroke-width="0.6"/><path d="M0.6 5.4 L5.4 0.6" stroke="#e8384a" stroke-width="0.8"/></svg>
<div class="t" style="left:621.6px;top:318.63px;font-size:5px;color:#d0d0d4">Дарiна Цюбал</div>
<div class="t" style="left:706.1px;top:305.87px;font-size:5.9px;transform:translateX(-50%);transform-origin:0 0;color:#f4f4f4;font-weight:700">Максим</div>
<div class="abs" style="left:675.9px;top:317.55999999999995px;width:27.8px;height:7px;background:#26272b;border-radius:1.5px"></div>
<svg class="abs" style="left:676.5px;top:318.15999999999997px" width="6" height="6" viewBox="0 0 6 6"><rect x="2" y="0.4" width="2" height="3.2" rx="1" fill="#e8384a"/><path d="M1.2 2.6 Q1.2 4.6 3 4.6 Q4.8 4.6 4.8 2.6 M3 4.6 V5.6" fill="none" stroke="#e8384a" stroke-width="0.6"/><path d="M0.6 5.4 L5.4 0.6" stroke="#e8384a" stroke-width="0.8"/></svg>
<div class="t" style="left:684.1px;top:318.63px;font-size:5px;color:#d0d0d4">Максим</div>
<div class="t" style="left:643.6px;top:341.03px;font-size:5.9px;transform:translateX(-50%);transform-origin:0 0;color:#f4f4f4;font-weight:700">Ярмак&nbsp; Олексан...</div>
<div class="abs" style="left:613.4px;top:352.71999999999997px;width:51.3px;height:7px;background:#26272b;border-radius:1.5px"></div>
<svg class="abs" style="left:614.0px;top:353.32px" width="6" height="6" viewBox="0 0 6 6"><rect x="2" y="0.4" width="2" height="3.2" rx="1" fill="#e8384a"/><path d="M1.2 2.6 Q1.2 4.6 3 4.6 Q4.8 4.6 4.8 2.6 M3 4.6 V5.6" fill="none" stroke="#e8384a" stroke-width="0.6"/><path d="M0.6 5.4 L5.4 0.6" stroke="#e8384a" stroke-width="0.8"/></svg>
<div class="t" style="left:621.6px;top:353.79px;font-size:5px;color:#d0d0d4">Ярмак Олександр</div>
<div class="t" style="left:706.1px;top:341.03px;font-size:5.9px;transform:translateX(-50%);transform-origin:0 0;color:#f4f4f4;font-weight:700">Заїка Назар</div>
<div class="abs" style="left:675.9px;top:352.71999999999997px;width:36.9px;height:7px;background:#26272b;border-radius:1.5px"></div>
<svg class="abs" style="left:676.5px;top:353.32px" width="6" height="6" viewBox="0 0 6 6"><rect x="2" y="0.4" width="2" height="3.2" rx="1" fill="#e8384a"/><path d="M1.2 2.6 Q1.2 4.6 3 4.6 Q4.8 4.6 4.8 2.6 M3 4.6 V5.6" fill="none" stroke="#e8384a" stroke-width="0.6"/><path d="M0.6 5.4 L5.4 0.6" stroke="#e8384a" stroke-width="0.8"/></svg>
<div class="t" style="left:684.1px;top:353.79px;font-size:5px;color:#d0d0d4">Заїка Назар</div>
<div class="abs" style="left:660.4px;top:361px;width:28.5px;height:12.6px;background:#1c1f22;border-radius:1.5px"></div>
<svg class="abs" style="left:670px;top:364px" width="10" height="7" viewBox="0 0 10 7"><path d="M2.4 2.3 L4.8 4.6 L7.2 2.3" fill="none" stroke="#aaa" stroke-width="0.8"/></svg>
<div class="abs" style="left:0;top:383.2px;width:750px;height:23px;background:#000"></div>
<svg class="abs" style="left:0;top:383" width="750" height="23" viewBox="0 383 750 23"><rect x="18.3" y="386.5" width="3.6" height="6" rx="1.8" fill="none" stroke="#ccc" stroke-width="0.7"/><path d="M16.8 390.5 Q16.8 394 20.1 394 Q23.4 394 23.4 390.5 M20.1 394 V395.7 M18.3 395.7 H22" fill="none" stroke="#ccc" stroke-width="0.7"/><path d="M16 396 L24.5 386" stroke="#e8205a" stroke-width="1.1"/><path d="M31.3 392.6 L32.5 391.4 L33.7 392.6" fill="none" stroke="#bbb" stroke-width="0.6"/><rect x="53" y="388.5" width="5.5" height="5" rx="0.8" fill="none" stroke="#ccc" stroke-width="0.7"/><path d="M58.8 390.2 L60.8 389 V393 L58.8 391.8" fill="none" stroke="#ccc" stroke-width="0.6"/><path d="M70 392.6 L71.2 391.4 L72.4 392.6" fill="none" stroke="#bbb" stroke-width="0.6"/><path d="M308 387.5 H315 Q316 387.5 316 388.5 V393 Q316 394 315 394 H310.5 L308.8 395.8 V394 H308 Q307 394 307 393 V388.5 Q307 387.5 308 387.5 Z" fill="none" stroke="#ccc" stroke-width="0.7"/><path d="M323.2 392.6 L324.4 391.4 L325.6 392.6" fill="none" stroke="#bbb" stroke-width="0.6"/><circle cx="352.6" cy="389.6" r="1.5" fill="none" stroke="#ccc" stroke-width="0.7"/><circle cx="355.9" cy="390.4" r="1.3" fill="none" stroke="#ccc" stroke-width="0.7"/><path d="M350.4 396 Q350.4 392.4 352.6 392.4 Q354 392.4 354.4 393.6 M353.8 396 Q353.8 393.4 355.9 393.4 Q358 393.4 358 396 Z" fill="none" stroke="#ccc" stroke-width="0.7"/><path d="M373.6 393 L374.8 391.8 L376 393" fill="none" stroke="#bbb" stroke-width="0.6"/><path d="M398.7 395 L395.2 391.5 Q393.8 389.8 395 388.4 Q396.6 387 398.7 388.9 Q400.8 387 402.4 388.4 Q403.6 389.8 402.2 391.5 Z" fill="none" stroke="#ccc" stroke-width="0.7"/><path d="M412.4 392.6 L413.6 391.4 L414.8 392.6" fill="none" stroke="#bbb" stroke-width="0.6"/><rect x="434" y="388.2" width="7.2" height="6" rx="0.8" fill="none" stroke="#ccc" stroke-width="0.7"/><path d="M437.6 393 V389.6 M436.3 390.8 L437.6 389.5 L438.9 390.8" fill="none" stroke="#ccc" stroke-width="0.6"/><path d="M450.3 392.6 L451.5 391.4 L452.7 392.6" fill="none" stroke="#bbb" stroke-width="0.6"/><circle cx="477.2" cy="391.6" r="4" fill="none" stroke="#ccc" stroke-width="0.7"/><circle cx="475.6" cy="391.6" r="0.45" fill="#ccc"/><circle cx="477.2" cy="391.6" r="0.45" fill="#ccc"/><circle cx="478.8" cy="391.6" r="0.45" fill="#ccc"/><path d="M730.4 387.3 H735.6 V396.2 H733.6 M733.6 388.6 V395.6 L731.8 396.6" fill="none" stroke="#e8205a" stroke-width="0.9"/><circle cx="729.6" cy="389.4" r="1.3" fill="none" stroke="#eee" stroke-width="0.6"/><path d="M728 396.4 L728.6 392 Q729.5 390.8 730.6 391.6 L731.6 393 L732.2 396.4 M727.2 393.8 L728.6 392.4 M730.2 393.4 L732 392.2" fill="none" stroke="#eee" stroke-width="0.6"/></svg>
<div class="t" style="left:20.1px;top:399.71px;font-size:4.6px;transform:translateX(-50%);transform-origin:0 0;color:#d8d8dc">Звук</div>
<div class="t" style="left:56.5px;top:399.71px;font-size:4.6px;transform:translateX(-50%);transform-origin:0 0;color:#d8d8dc">Видео</div>
<div class="t" style="left:311.5px;top:399.71px;font-size:4.6px;transform:translateX(-50%);transform-origin:0 0;color:#d8d8dc">Чат</div>
<div class="t" style="left:354.5px;top:399.71px;font-size:4.6px;transform:translateX(-50%);transform-origin:0 0;color:#d8d8dc">Участники</div>
<div class="t" style="left:398.7px;top:399.71px;font-size:4.6px;transform:translateX(-50%);transform-origin:0 0;color:#d8d8dc">Отреагировать</div>
<div class="t" style="left:437.6px;top:399.71px;font-size:4.6px;transform:translateX(-50%);transform-origin:0 0;color:#d8d8dc">Поделиться</div>
<div class="t" style="left:477.2px;top:399.71px;font-size:4.6px;transform:translateX(-50%);transform-origin:0 0;color:#d8d8dc">Дополнительно</div>
<div class="t" style="left:731px;top:399.71px;font-size:4.6px;transform:translateX(-50%);transform-origin:0 0;color:#d8d8dc">Выйти</div>
<div class="t" style="left:360.6px;top:389.03px;font-size:5.4px;color:#c8c8c8">55</div>
<div class="abs" style="left:0;top:406px;width:750px;height:16px;background:linear-gradient(90deg,#4d463c 0%,#4b4439 50%,#4a4338 100%);border-top:0.8px solid #6a6254"></div>
<div class="abs" style="left:192.3px;top:406.6px;width:16.4px;height:15.4px;background:#5e5955;border-radius:1px"></div>
<div class="abs" style="left:196px;top:421px;width:9px;height:1px;background:#a8b8d0"></div>
<div class="abs" style="left:116.5px;top:421px;width:15.5px;height:1px;background:#8ab8e8"></div>
<div class="abs" style="left:272.5px;top:421px;width:11px;height:1px;background:#8a9ab0"></div>
<div class="abs" style="left:330.5px;top:421px;width:11px;height:1px;background:#8a9ab0"></div>
<div class="abs" style="left:347.8px;top:421px;width:11px;height:1px;background:#8a9ab0"></div>
<svg class="abs" style="left:0;top:406" width="750" height="16" viewBox="0 406 750 16"><path d="M5.6 410.6 L8.8 410.1 V413.6 H5.6 Z M9.4 410 L13 409.5 V413.6 H9.4 Z M5.6 414.2 H8.8 V417.7 L5.6 417.2 Z M9.4 414.2 H13 V418.3 L9.4 417.8 Z" fill="#f4f4f4"/><circle cx="28.9" cy="413" r="3" fill="none" stroke="#f0f0f0" stroke-width="0.9"/><path d="M26.8 415.2 L24.6 417.4" stroke="#f0f0f0" stroke-width="1"/><rect x="45" y="411" width="4.5" height="5.5" fill="none" stroke="#ddd" stroke-width="0.6"/><path d="M50.5 410.5 V417 M44 410.5 V417" stroke="#ddd" stroke-width="0.5"/><circle cx="66.5" cy="414" r="4.4" fill="#5865f2"/><path d="M64.3 413.2 Q66.5 412 68.7 413.2 V415.3 Q66.5 416.4 64.3 415.3 Z" fill="#fff"/><path d="M82 416.5 Q82.5 410.5 86 410.8 Q89.5 411 89 415 Q88.6 417.8 85 417.6 Z" fill="#7a5cf0"/><path d="M84 411.5 Q87.5 411 88.5 413 L86 417 Q83 417 84 411.5Z" fill="#f2a040"/><path d="M83 416 Q86 413 89 414.5" stroke="#30b8e0" stroke-width="1.2" fill="none"/><rect x="101" y="409.5" width="6.4" height="9" rx="0.6" fill="#5a6a7a"/><rect x="102" y="410.5" width="4.4" height="1.8" fill="#c8d4e0"/><path d="M102.2 413.8 H106.2 M102.2 415.3 H106.2 M102.2 416.8 H106.2" stroke="#c8d4e0" stroke-width="0.7" stroke-dasharray="0.9 0.6"/><path d="M119.5 411 H123.5 L124.5 412 H129 V417.8 H119.5 Z" fill="#f8c84a"/><rect x="119.5" y="413" width="9.5" height="4.8" fill="#f0b030"/><rect x="121" y="414.8" width="6.5" height="1.6" fill="#4aa0e0"/><path d="M139 412 L147 409.8 V418.3 L139 417 Z" fill="#1a8ae0"/><rect x="138" y="412" width="5" height="5" fill="#0f6cc8"/><circle cx="140.5" cy="414.5" r="1.3" fill="none" stroke="#fff" stroke-width="0.6"/><path d="M143 413 L147 415.5 V418 H143Z" fill="#40b0f0"/><rect x="157.7" y="409.6" width="9.4" height="9" rx="0.8" fill="#2a4ab8"/><rect x="159.6" y="409.6" width="5.6" height="3.2" fill="#dfe6f6"/><rect x="162.6" y="410.1" width="1.4" height="2.2" fill="#2a4ab8"/><rect x="159" y="414.2" width="6.8" height="4.4" fill="#f4d0dc"/><rect x="177" y="409.6" width="9" height="8.8" rx="0.6" fill="#1f8a4a"/><rect x="180.5" y="410.5" width="4.8" height="7" fill="#2aa85e"/><path d="M177.8 411.8 L180.6 416.2 M180.6 411.8 L177.8 416.2" stroke="#fff" stroke-width="0.8"/><rect x="196" y="410" width="9" height="8.6" rx="1.6" fill="#2d6ff0"/><text x="200.5" y="416" text-anchor="middle" font-family="Liberation Sans" font-size="3.6" font-weight="700" fill="#fff">ZY</text><circle cx="219.6" cy="414" r="4.4" fill="#1a9ad8"/><path d="M216 415.5 Q217 411 220.5 411.5 Q223.5 412 223.6 414.5 H218.5 Q219 417 223 416.5 Q221 419 218 418" fill="#5ed070"/><circle cx="219.8" cy="414.2" r="1.5" fill="#0c5aa6"/><circle cx="238.7" cy="414" r="4.4" fill="#ff7139"/><circle cx="239.2" cy="414.5" r="2.6" fill="#7a3cd8"/><path d="M234.5 413 Q236 409.5 239.5 409.6 Q237 411 237.5 413 Z" fill="#ffbd40"/><circle cx="257.7" cy="413.8" r="3.9" fill="none" stroke="#2ac84a" stroke-width="1.3"/><path d="M253.6 418.4 L254.4 415.8 L256.2 417.4Z" fill="#2ac84a"/><path d="M256.3 412.3 Q256.6 415.2 259.3 415.4" stroke="#2ac84a" stroke-width="1" fill="none"/><path d="M273.5 413.5 Q273.5 409.8 277.5 409.8 Q281.5 409.8 281.5 413.5 Q281.5 417 277.5 417 L275.3 418.8 V416.6 Q273.5 415.8 273.5 413.5Z" fill="#7c5cd8"/><circle cx="280.5" cy="417" r="2.2" fill="#e83040"/><circle cx="296.5" cy="414" r="4.4" fill="#e04030"/><path d="M296.5 414 L292.7 416.2 A4.4 4.4 0 0 0 298.0 418.1 Z" fill="#2aa850"/><path d="M296.5 414 L300.9 414 A4.4 4.4 0 0 1 298.0 418.1 Z" fill="#f8c030"/><circle cx="296.5" cy="414" r="1.9" fill="#fff"/><circle cx="296.5" cy="414" r="1.4" fill="#3a80e8"/><rect x="311" y="409.6" width="9" height="8.8" rx="0.6" fill="#2b5eb8"/><rect x="314" y="410.5" width="5.5" height="7" fill="#5a9af0"/><rect x="310.5" y="411.6" width="4.8" height="4.8" fill="#184a9a"/><text x="312.9" y="415.5" text-anchor="middle" font-family="Liberation Sans" font-size="3.6" font-weight="700" fill="#fff">W</text><circle cx="334.6" cy="414" r="4.4" fill="#e04030"/><path d="M334.6 414 L330.8 416.2 A4.4 4.4 0 0 0 336.1 418.1 Z" fill="#2aa850"/><path d="M334.6 414 L339.0 414 A4.4 4.4 0 0 1 336.1 418.1 Z" fill="#f8c030"/><circle cx="334.6" cy="414" r="1.9" fill="#fff"/><circle cx="334.6" cy="414" r="1.4" fill="#3a80e8"/><circle cx="336.5" cy="416" r="1.8" fill="#3a3430"/><circle cx="336.5" cy="415.6" r="0.9" fill="#d8c0b0"/><circle cx="353.7" cy="414" r="4.4" fill="#e04030"/><path d="M353.7 414 L349.9 416.2 A4.4 4.4 0 0 0 355.2 418.1 Z" fill="#2aa850"/><path d="M353.7 414 L358.09999999999997 414 A4.4 4.4 0 0 1 355.2 418.1 Z" fill="#f8c030"/><circle cx="353.7" cy="414" r="1.9" fill="#fff"/><circle cx="353.7" cy="414" r="1.4" fill="#3a80e8"/><circle cx="355.6" cy="416" r="1.8" fill="#3a3430"/><circle cx="355.6" cy="415.6" r="0.9" fill="#d8c0b0"/><path d="M368 415 Q368 409.5 373 409.6 Q377.5 409.8 376.8 413 Q376 415 374 414.5 Q372 414.5 372.5 416.5 Q372 418.5 370 418 Q368 417.5 368 415Z" fill="#c8d8e8"/><circle cx="370.5" cy="412.5" r="0.8" fill="#e84040"/><circle cx="373" cy="411.5" r="0.8" fill="#40a0f0"/><circle cx="375" cy="412.6" r="0.8" fill="#f8c030"/><path d="M371 418 L377 411" stroke="#a07040" stroke-width="0.8"/><defs><radialGradient id="sun" cx="0.35" cy="0.3" r="0.8"><stop offset="0" stop-color="#ffc830"/><stop offset="1" stop-color="#f27a08"/></radialGradient></defs><circle cx="610.3" cy="414.3" r="4" fill="url(#sun)"/><path d="M654.6 415 L656.6 413 L658.6 415" fill="none" stroke="#eee" stroke-width="0.7"/><rect x="662.8" y="411.2" width="5.8" height="4.2" fill="none" stroke="#ddd" stroke-width="0.6"/><path d="M664 417 H667.5 M665.7 415.4 V417" stroke="#ddd" stroke-width="0.6"/><path d="M672.3 412.6 H673.5 L675 411.3 V417 L673.5 415.8 H672.3 Z" fill="none" stroke="#ddd" stroke-width="0.6"/><path d="M676.2 412.6 Q677.2 414.1 676.2 415.6" fill="none" stroke="#ddd" stroke-width="0.5"/><path d="M683.5 411 L686.8 410.5 L687.5 414 L685 417.5 L683 417 Z" fill="none" stroke="#ddd" stroke-width="0.6"/><path d="M733.8 410.5 H740 V415.8 H736.5 L735 417.3 V415.8 H733.8 Z" fill="#eee"/><path d="M734.8 412 H739 M734.8 413.5 H739" stroke="#4a4540" stroke-width="0.4"/></svg>
<div class="t" style="left:617.7px;top:411.74px;font-size:5.5px;color:#f0f0f0">4°C&nbsp; Sunny</div>
<div class="t" style="left:692.4px;top:412.07px;font-size:5px;color:#f0f0f0">УКР</div>
<div class="t" style="left:717px;top:408.91px;font-size:4.6px;transform:translateX(-50%);transform-origin:0 0;color:#f4f4f4">10:16</div>
<div class="t" style="left:717px;top:415.71px;font-size:4.6px;transform:translateX(-50%);transform-origin:0 0;color:#f4f4f4">10.03.2026</div>
</div></body></html>
